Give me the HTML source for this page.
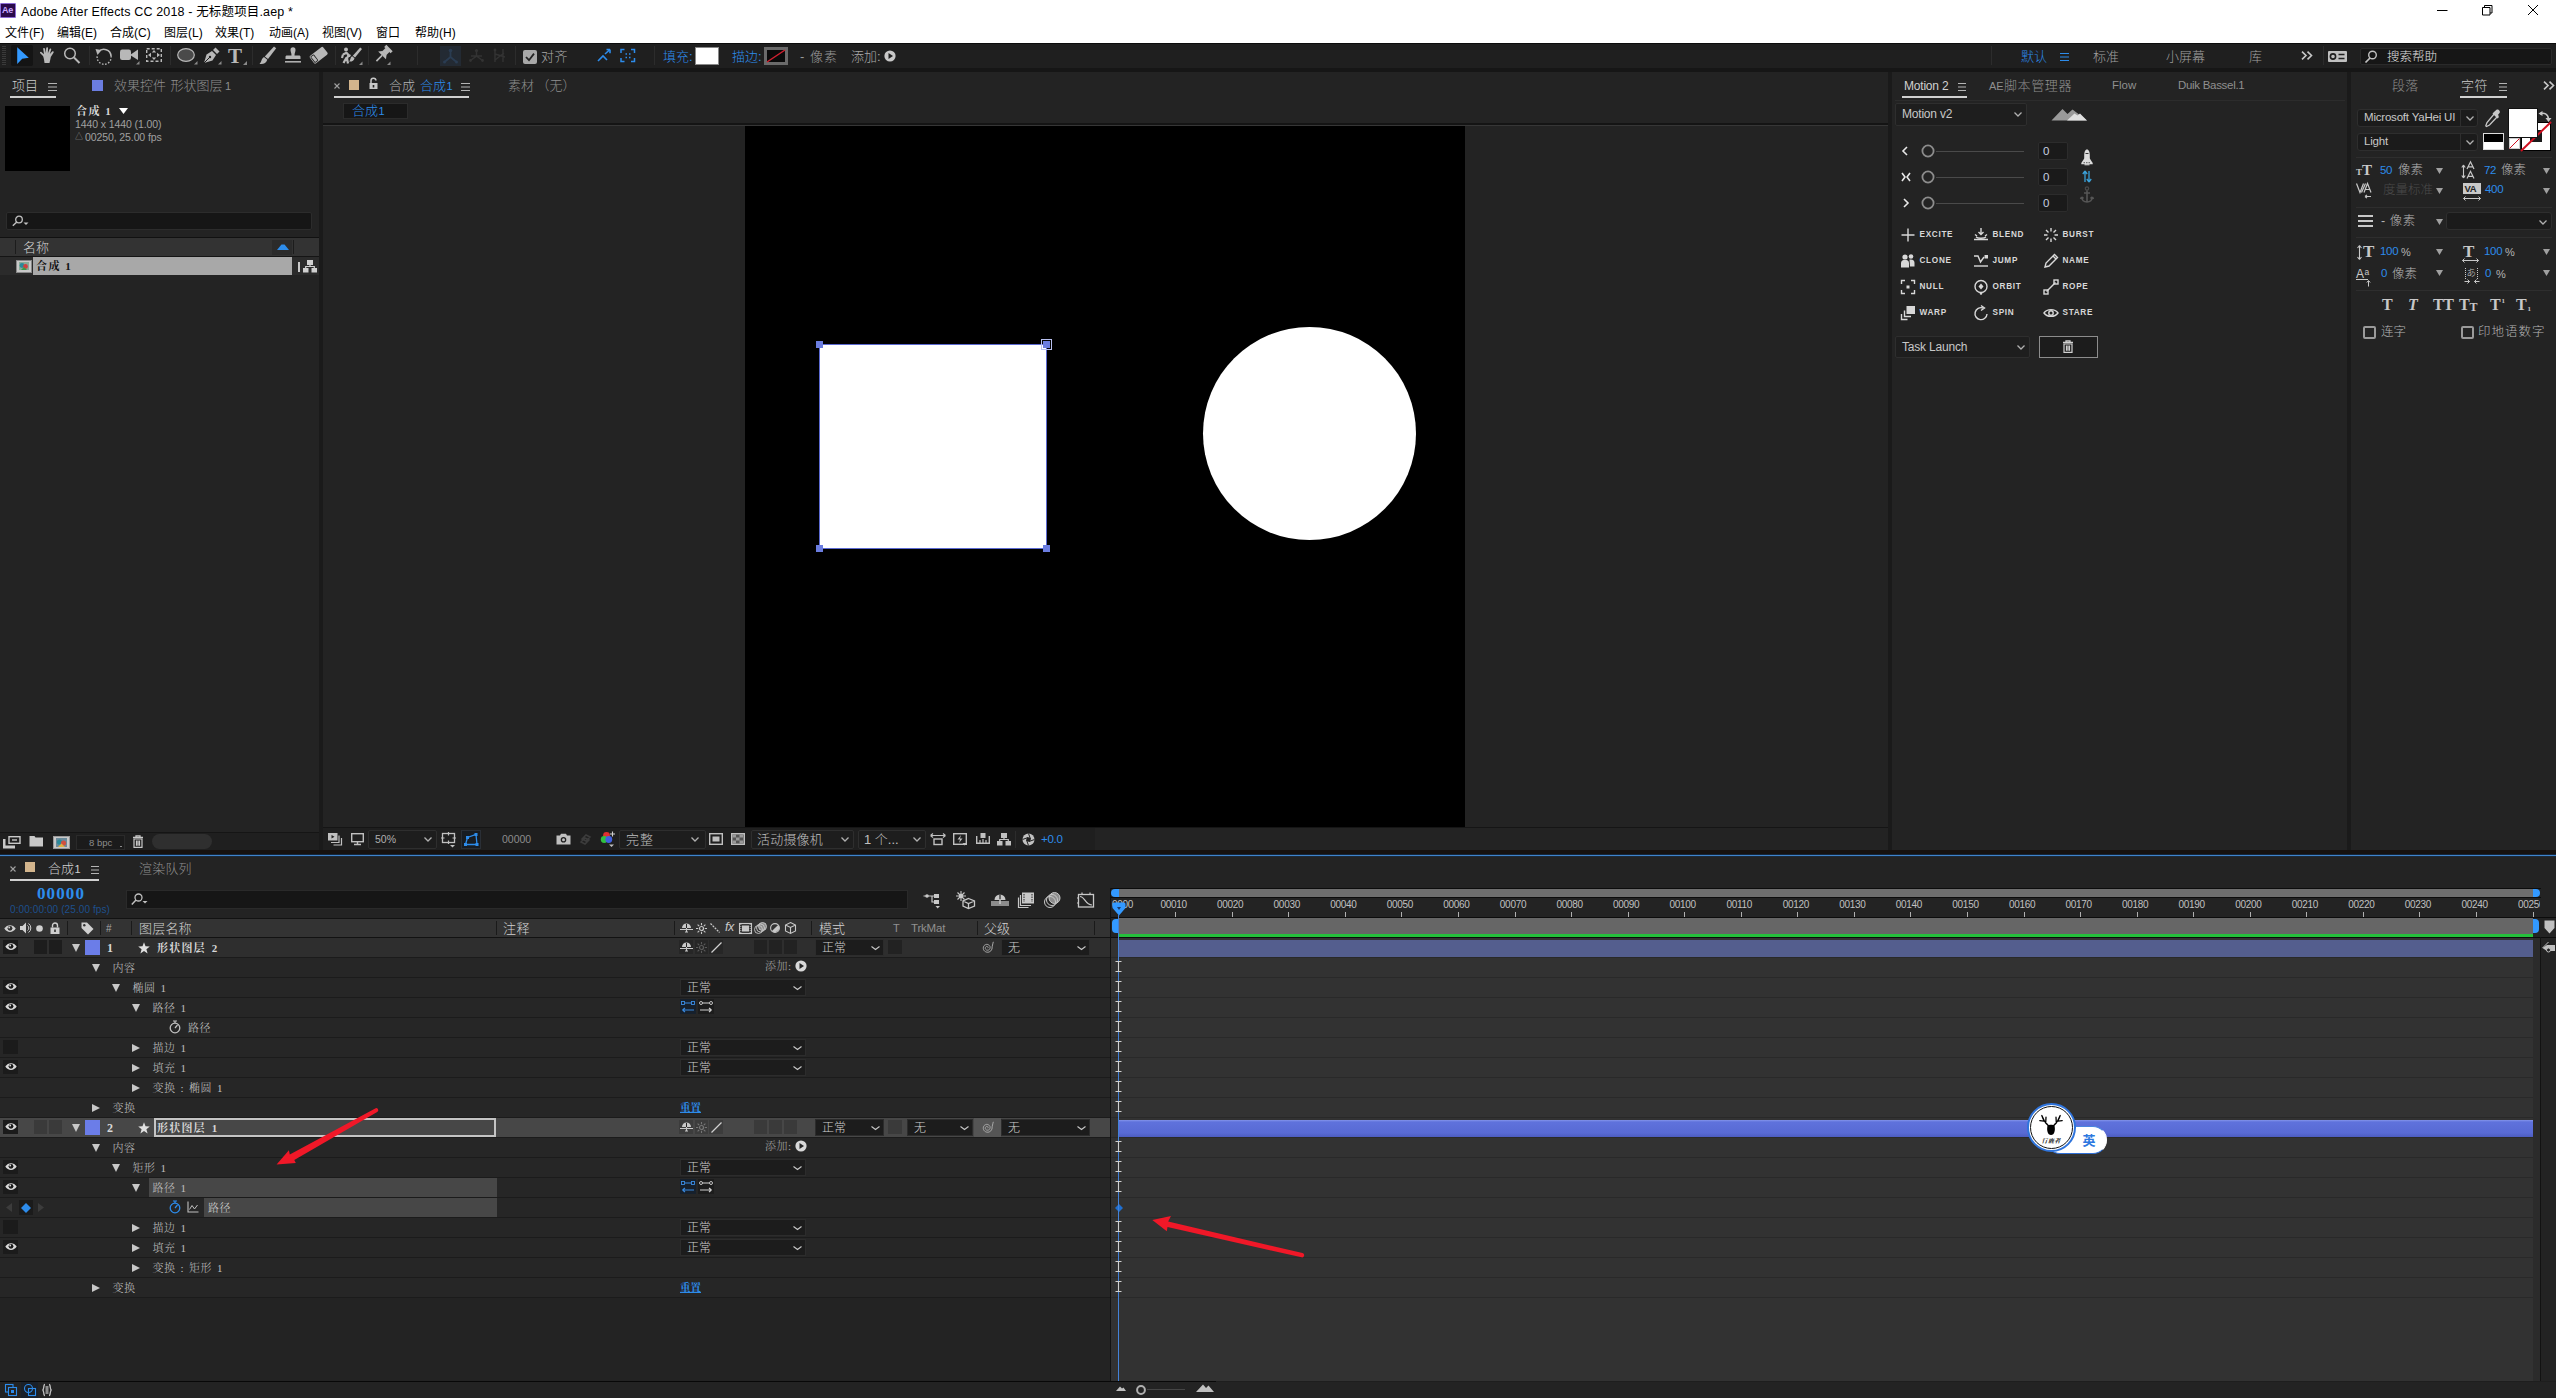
<!DOCTYPE html><html lang="zh"><head><meta charset="utf-8"><title>Adobe After Effects CC 2018</title><style>
*{box-sizing:border-box}
html,body{margin:0;padding:0}
body{width:2556px;height:1398px;background:#161616;position:relative;overflow:hidden;
font-family:"Liberation Sans","Noto Sans CJK SC",sans-serif;font-size:12px;color:#b4b4b4;font-weight:300;}
.a{position:absolute}
.t{position:absolute;white-space:nowrap;line-height:1}
.sf{font-family:"Liberation Serif","Noto Serif CJK SC",serif}
svg{position:absolute;overflow:visible}
</style></head><body>
<!-- p_top -->
<div class="a" style="left:0px;top:0px;width:2556px;height:43px;background:#ffffff;"></div><div class="a" style="left:0px;top:3px;width:16px;height:15px;background:#2a0a4a;border:1px solid #8c6bd6;border-radius:1px;"></div><span class="t " style="left:2px;top:4px;height:13px;line-height:13px;font-size:9px;color:#c9a8ff;font-weight:bold;letter-spacing:-0.3px;">Ae</span><span class="t " style="left:21px;top:3.75px;height:16.5px;line-height:16.5px;font-size:12.5px;color:#000;letter-spacing:0.150px;font-weight:400;">Adobe After Effects CC 2018 - 无标题项目.aep *</span><svg style="left:2437px;top:4px" width="12" height="12" viewBox="0 0 12 12"><path d="M0 6.500 H10.500" stroke="#000" stroke-width="1"/></svg><svg style="left:2482px;top:5px" width="12" height="12" viewBox="0 0 12 12"><path d="M0.500 2.500 H8 V10 H0.500 Z M2.500 2.500 V0.500 H10 V8 H8" stroke="#000" fill="none" stroke-width="1"/></svg><svg style="left:2528px;top:5px" width="12" height="12" viewBox="0 0 12 12"><path d="M0 0 L10 10 M10 0 L0 10" stroke="#000" stroke-width="1"/></svg><span class="t " style="left:5px;top:25px;height:16px;line-height:16px;font-size:12px;color:#000;font-weight:400;">文件(F)</span><span class="t " style="left:57px;top:25px;height:16px;line-height:16px;font-size:12px;color:#000;font-weight:400;">编辑(E)</span><span class="t " style="left:110px;top:25px;height:16px;line-height:16px;font-size:12px;color:#000;font-weight:400;">合成(C)</span><span class="t " style="left:164px;top:25px;height:16px;line-height:16px;font-size:12px;color:#000;font-weight:400;">图层(L)</span><span class="t " style="left:215px;top:25px;height:16px;line-height:16px;font-size:12px;color:#000;font-weight:400;">效果(T)</span><span class="t " style="left:269px;top:25px;height:16px;line-height:16px;font-size:12px;color:#000;font-weight:400;">动画(A)</span><span class="t " style="left:322px;top:25px;height:16px;line-height:16px;font-size:12px;color:#000;font-weight:400;">视图(V)</span><span class="t " style="left:376px;top:25px;height:16px;line-height:16px;font-size:12px;color:#000;font-weight:400;">窗口</span><span class="t " style="left:415px;top:25px;height:16px;line-height:16px;font-size:12px;color:#000;font-weight:400;">帮助(H)</span><div class="a" style="left:0px;top:43px;width:2556px;height:1px;background:#0c0c0c;"></div><div class="a" style="left:0px;top:44px;width:2556px;height:24px;background:#1f1f1f;"></div><div class="a" style="left:0px;top:68px;width:2556px;height:4px;background:#161616;"></div><div class="a" style="left:2px;top:46px;width:4px;height:19px;background:repeating-linear-gradient(#3a3a3a 0 1px,#1f1f1f 1px 2px);"></div><div class="a" style="left:11px;top:45px;width:22px;height:21px;background:#141414;border-radius:2px;"></div><svg style="left:16px;top:47px" width="14" height="18" viewBox="0 0 14 18"><path d="M1.200 0.300 L12.800 10.800 L6.200 11.800 L1.200 17 Z" fill="#3399ff"/></svg><svg style="left:39px;top:47px" width="16" height="17" viewBox="0 0 16 17"><path d="M4 9 L1.2 6.2 C0.4 5.4 1.6 4.4 2.4 5 L5 7.2 L4.2 2 C4 0.8 5.8 0.6 6 1.8 L6.8 6 L7.2 1 C7.3 -0.2 9.1 -0.1 9 1.1 L8.9 6.2 L10.6 2 C11 0.9 12.6 1.5 12.2 2.6 L10.8 7 L13.2 4.6 C14 3.8 15.2 4.8 14.5 5.7 L11.8 10 C11.4 12.5 10.8 14.6 10.5 16 L5.5 16 C5.3 13.6 4.8 11 4 9 Z" fill="#b8b8b8"/></svg><svg style="left:63px;top:47px" width="18" height="18" viewBox="0 0 18 18"><circle cx="7" cy="6.5" r="5.3" fill="none" stroke="#b8b8b8" stroke-width="1.5"/><path d="M11 10.5 L16.5 16" stroke="#b8b8b8" stroke-width="2"/></svg><div class="a" style="left:89px;top:46px;width:1px;height:19px;background:#2c2c2c;"></div><svg style="left:95px;top:47px" width="18" height="18" viewBox="0 0 18 18"><path d="M3.5 5 A7 7 0 0 1 16 9" fill="none" stroke="#b8b8b8" stroke-width="1.6"/><path d="M0.5 2 L6.5 3 L2.5 8 Z" fill="#b8b8b8"/><path d="M16 9 A7 7 0 1 1 2.5 8" fill="none" stroke="#b8b8b8" stroke-width="1.4" stroke-dasharray="1.6 1.6"/></svg><svg style="left:120px;top:49px" width="20" height="16" viewBox="0 0 20 16"><rect x="0" y="0.5" width="11" height="10.5" rx="2.2" fill="#b8b8b8"/><path d="M10 6 L18 0.5 V11 Z" fill="#b8b8b8"/><path d="M16 15.5 H19.5 V12 Z" fill="#8a8a8a"/></svg><svg style="left:146px;top:48px" width="17" height="15" viewBox="0 0 17 15"><rect x="0.7" y="0.7" width="14.6" height="12.6" fill="none" stroke="#b8b8b8" stroke-width="1.4" stroke-dasharray="3 2"/><path d="M2 7 L5 4.8 V9.2 Z M14 7 L11 4.8 V9.2 Z M8 2 L10.2 4.6 H5.8 Z M8 12 L10.2 9.4 H5.8 Z" fill="#b8b8b8"/></svg><div class="a" style="left:170px;top:46px;width:1px;height:19px;background:#2c2c2c;"></div><svg style="left:177px;top:48px" width="22" height="18" viewBox="0 0 22 18"><ellipse cx="9" cy="7" rx="8.3" ry="6.3" fill="#4a4a4a" stroke="#b8b8b8" stroke-width="1.2"/><path d="M17 16.5 H20.5 V13 Z" fill="#8a8a8a"/></svg><svg style="left:203px;top:47px" width="20" height="19" viewBox="0 0 20 19"><path d="M1 16 L3.5 7.5 L9 4 L13 8 L9.5 13.5 Z" fill="#b8b8b8"/><path d="M10 3 L12.5 0.5 L16.5 4.5 L14 7 Z" fill="#b8b8b8"/><path d="M1 16 L6.5 10.5" stroke="#1f1f1f" stroke-width="1"/><circle cx="7" cy="10" r="1.2" fill="#1f1f1f"/><path d="M15 17.5 H18.5 V14 Z" fill="#8a8a8a"/></svg><span class="t sf" style="left:228px;top:43.5px;height:25px;line-height:25px;font-size:21px;color:#b8b8b8;font-weight:bold;">T</span><svg style="left:243px;top:61px" width="4" height="4" viewBox="0 0 4 4"><path d="M0 4 H4 V0 Z" fill="#8a8a8a"/></svg><div class="a" style="left:252px;top:46px;width:1px;height:19px;background:#2c2c2c;"></div><svg style="left:259px;top:46px" width="18" height="19" viewBox="0 0 18 19"><path d="M15 0.500 L17.200 2.300 L9 13 L5.800 10.400 Z" fill="#b8b8b8"/><path d="M5 11 L8.300 13.700 C7.500 17 4 18.500 0.500 17.800 C2.800 16 2.200 12.500 5 11 Z" fill="#b8b8b8"/></svg><svg style="left:284px;top:47px" width="18" height="17" viewBox="0 0 18 17"><path d="M6.500 3 A2.500 2.800 0 1 1 11.500 3 C11.500 5 10.500 6 10.500 8.500 H15 C16 8.500 16.500 9 16.500 10 V12 H1.500 V10 C1.500 9 2 8.500 3 8.500 H7.500 C7.500 6 6.500 5 6.500 3 Z" fill="#b8b8b8"/><path d="M1 14.800 H17" stroke="#b8b8b8" stroke-width="1.500"/></svg><svg style="left:309px;top:46px" width="19" height="18" viewBox="0 0 19 18"><g transform="rotate(-38 9.500 9)"><rect x="1" y="4.500" width="17" height="9.500" rx="1.500" fill="#b8b8b8"/><rect x="1.700" y="5.200" width="4.500" height="8.100" rx="1" fill="#1f1f1f"/><rect x="2.500" y="6" width="2.900" height="6.500" fill="#b8b8b8"/></g></svg><div class="a" style="left:335px;top:46px;width:1px;height:19px;background:#2c2c2c;"></div><svg style="left:340px;top:47px" width="24" height="19" viewBox="0 0 24 19"><circle cx="6" cy="2.600" r="2" fill="#b8b8b8"/><path d="M3 7.500 L6.500 5.800 L8.500 8 L7 11.500 L8 16.500 M6.500 10.500 L3.500 16 M3 7.500 L2 11 M8.500 8 L10.500 9" stroke="#b8b8b8" stroke-width="2.200" fill="none" stroke-linejoin="round"/><path d="M20.200 0.500 L22 2 L15 10.500 L12.800 8.700 Z" fill="#b8b8b8"/><path d="M12.200 9.300 L14.500 11.200 C14 13.800 11.500 15 9 14.500 C10.800 13.300 10 10.300 12.200 9.300 Z" fill="#b8b8b8"/><path d="M19 18 H22.500 V14.500 Z" fill="#8a8a8a"/></svg><div class="a" style="left:368px;top:46px;width:1px;height:19px;background:#2c2c2c;"></div><svg style="left:372px;top:46px" width="20" height="20" viewBox="0 0 20 20"><g transform="translate(11.500 8) rotate(45)" fill="#b8b8b8"><rect x="-4.500" y="-8.500" width="9" height="3"/><rect x="-2.800" y="-6" width="5.600" height="5"/><path d="M-2.800 -1.500 H2.800 L5.500 2 H-5.500 Z"/><rect x="-0.800" y="2" width="1.600" height="8"/></g><path d="M15 19 H18.500 V15.500 Z" fill="#8a8a8a"/></svg><div class="a" style="left:417px;top:46px;width:1px;height:19px;background:#2c2c2c;"></div><div class="a" style="left:440px;top:46px;width:21px;height:20px;background:#232a33;"></div><svg style="left:442px;top:48px" width="17" height="16" viewBox="0 0 17 16"><path d="M8.500 2 V9 L2.500 14 M8.500 9 L14.500 14" stroke="#2a3c52" stroke-width="1.800" fill="none"/><circle cx="8.500" cy="2.500" r="1.800" fill="#2a3c52"/><circle cx="2.500" cy="14" r="1.500" fill="#2a3c52"/><circle cx="14.500" cy="14" r="1.500" fill="#2a3c52"/></svg><svg style="left:468px;top:48px" width="17" height="16" viewBox="0 0 17 16"><path d="M8.500 2 V8 L2.500 12.500 M8.500 8 L14.500 12.500 M3 8 L14 8" stroke="#333" stroke-width="1.500" fill="none"/><circle cx="8.500" cy="2.500" r="1.600" fill="#333"/><circle cx="2.500" cy="12.500" r="1.400" fill="#333"/><circle cx="14.500" cy="12.500" r="1.400" fill="#333"/></svg><svg style="left:492px;top:48px" width="17" height="16" viewBox="0 0 17 16"><path d="M3 1 V14 M11 1 V14 M3 6 L13 9 M3 12 L12 5" stroke="#333" stroke-width="1.400" fill="none"/><circle cx="3" cy="2" r="1.400" fill="#333"/></svg><div class="a" style="left:515px;top:46px;width:1px;height:19px;background:#2c2c2c;"></div><div class="a" style="left:523px;top:50px;width:14px;height:14px;background:#a8a8a8;border-radius:2px;"></div><svg style="left:523px;top:50px" width="14" height="14" viewBox="0 0 14 14"><path d="M3 7 L6 10.200 L11 3.600" stroke="#222" stroke-width="1.800" fill="none"/></svg><span class="t " style="left:541px;top:48px;height:17px;line-height:17px;font-size:13px;color:#a8a8a8;letter-spacing:0.500px;">对齐</span><svg style="left:596px;top:48px" width="17" height="16" viewBox="0 0 17 16"><path d="M2 13 L7 8 L11 12 M9 6 L14 1.500 M14 1.500 H10.500 M14 1.500 V5.200" stroke="#2d8ceb" stroke-width="1.600" fill="none"/></svg><svg style="left:620px;top:48px" width="16" height="16" viewBox="0 0 16 16"><path d="M1 5 V1.500 H4.500 M11 1.500 H14.500 V5 M14.500 10 V13.500 H11 M4.500 13.500 H1 V10" stroke="#2d8ceb" stroke-width="1.500" fill="none"/><path d="M5.500 6 H7 M9 6 H10.500 M5.500 9.500 H7 M9 9.500 H10.500" stroke="#2d8ceb" stroke-width="1.500"/></svg><div class="a" style="left:654px;top:46px;width:1px;height:19px;background:#2c2c2c;"></div><span class="t " style="left:663px;top:48px;height:17px;line-height:17px;font-size:13px;color:#2d8ceb;letter-spacing:0;">填充:</span><div class="a" style="left:695px;top:47px;width:24px;height:18px;background:#ffffff;border:1px solid #888;"></div><span class="t " style="left:732px;top:48px;height:17px;line-height:17px;font-size:13px;color:#2d8ceb;letter-spacing:0;">描边:</span><div class="a" style="left:764px;top:47px;width:24px;height:18px;background:#0a0a0a;border:3px solid #6a6a6a;"></div><svg style="left:766px;top:49px" width="20" height="14" viewBox="0 0 20 14"><path d="M1 13 L19 1" stroke="#d02030" stroke-width="1.500"/></svg><span class="t " style="left:800px;top:48px;height:17px;line-height:17px;font-size:13px;color:#9a9a9a;letter-spacing:1px;">- 像素</span><span class="t " style="left:851px;top:48px;height:17px;line-height:17px;font-size:13px;color:#a8a8a8;letter-spacing:0;">添加:</span><svg style="left:884px;top:50px" width="12" height="12" viewBox="0 0 12 12"><circle cx="6" cy="6" r="5.600" fill="#c8c8c8"/><path d="M4.500 3 L9 6 L4.500 9 Z" fill="#1f1f1f"/></svg><div class="a" style="left:1991px;top:46px;width:1px;height:19px;background:#2c2c2c;"></div><span class="t " style="left:2021px;top:47.5px;height:17px;line-height:17px;font-size:13px;color:#2d8ceb;letter-spacing:0;">默认</span><svg style="left:2060px;top:52.5px" width="9" height="8" viewBox="0 0 9 8"><path d="M0 0.5 H9 M0 4 H9 M0 7.5 H9" stroke="#2d8ceb" stroke-width="1.2" fill="none"/></svg><span class="t " style="left:2093px;top:47.5px;height:17px;line-height:17px;font-size:13px;color:#a0a0a0;letter-spacing:0;">标准</span><span class="t " style="left:2166px;top:47.5px;height:17px;line-height:17px;font-size:13px;color:#a0a0a0;letter-spacing:0;">小屏幕</span><span class="t " style="left:2249px;top:47.5px;height:17px;line-height:17px;font-size:13px;color:#a0a0a0;">库</span><svg style="left:2301px;top:51px" width="12" height="9" viewBox="0 0 12 9"><path d="M1 0.700 L5 4.500 L1 8.300 M6.500 0.700 L10.500 4.500 L6.500 8.300" stroke="#c8c8c8" stroke-width="1.600" fill="none"/></svg><div class="a" style="left:2323px;top:46px;width:1px;height:19px;background:#2c2c2c;"></div><svg style="left:2328px;top:51px" width="19" height="11" viewBox="0 0 19 11"><rect x="0" y="0" width="19" height="11" rx="1" fill="#c0c0c0"/><circle cx="5" cy="5.500" r="2.600" fill="none" stroke="#1f1f1f" stroke-width="1.600"/><path d="M10.500 3.500 H16.500 M10.500 7.500 H16.500" stroke="#1f1f1f" stroke-width="1.500"/></svg><div class="a" style="left:2360px;top:48px;width:192px;height:17px;background:#161616;border:1px solid #2a2a2a;border-radius:2px;"></div><svg style="left:2364px;top:50px" width="14" height="14" viewBox="0 0 14 14"><circle cx="8.500" cy="5" r="3.800" fill="none" stroke="#c0c0c0" stroke-width="1.400"/><path d="M6 8 L1.500 12.500" stroke="#c0c0c0" stroke-width="1.700"/></svg><span class="t " style="left:2387px;top:48.75px;height:16.5px;line-height:16.5px;font-size:12.5px;color:#e0e0e0;">搜索帮助</span>
<!-- p_project -->
<div class="a" style="left:0px;top:72px;width:319px;height:778px;background:#232323;"></div><div class="a" style="left:319px;top:72px;width:4px;height:778px;background:#1a1a1a;"></div><span class="t " style="left:12px;top:77px;height:17px;line-height:17px;font-size:13px;color:#d0d0d0;letter-spacing:0;">项目</span><svg style="left:47.5px;top:82.5px" width="9" height="8" viewBox="0 0 9 8"><path d="M0 0.5 H9 M0 4 H9 M0 7.5 H9" stroke="#b4b4b4" stroke-width="1.2" fill="none"/></svg><div class="a" style="left:10px;top:96px;width:46px;height:2px;background:#d0d0d0;"></div><div class="a" style="left:92px;top:80px;width:11px;height:11px;background:#6b7de0;"></div><span class="t " style="left:114px;top:77px;height:17px;line-height:17px;font-size:13px;color:#8f8f8f;letter-spacing:0;word-spacing:1px;">效果控件 形状图层</span><span class="t " style="left:225px;top:78.5px;height:15px;line-height:15px;font-size:11px;color:#8f8f8f;">1</span><div class="a" style="left:5px;top:106px;width:65px;height:65px;background:#000;"></div><span class="t sf" style="left:76px;top:103.5px;height:15px;line-height:15px;font-size:11px;color:#d8d8d8;font-weight:bold;letter-spacing:1.5px;">合成 1</span><svg style="left:119px;top:108px" width="9" height="6" viewBox="0 0 9 6"><path d="M0 0 H9 L4.5 6 Z" fill="#ffffff"/></svg><span class="t " style="left:75px;top:116.75px;height:14.5px;line-height:14.5px;font-size:10.5px;color:#a0a0a0;letter-spacing:-0.1px;">1440 x 1440 (1.00)</span><span class="t " style="left:75px;top:131px;height:12px;line-height:12px;font-size:8px;color:#a0a0a0;">△</span><span class="t " style="left:85px;top:129.75px;height:14.5px;line-height:14.5px;font-size:10.5px;color:#a0a0a0;letter-spacing:-0.1px;">00250, 25.00 fps</span><div class="a" style="left:6px;top:212px;width:306px;height:18px;background:#161616;border:1px solid #2c2c2c;border-radius:2px;"></div><svg style="left:12px;top:215px" width="18" height="12" viewBox="0 0 18 12"><circle cx="7" cy="4.500" r="3.300" fill="none" stroke="#c0c0c0" stroke-width="1.300"/><path d="M4.800 7 L0.800 10.800" stroke="#c0c0c0" stroke-width="1.500"/><path d="M11.500 7.500 H16.500 L14 10 Z" fill="#c0c0c0"/></svg><div class="a" style="left:0px;top:237px;width:319px;height:1px;background:#111;"></div><div class="a" style="left:0px;top:238px;width:319px;height:18px;background:#333333;"></div><div class="a" style="left:0px;top:256px;width:319px;height:1px;background:#151515;"></div><div class="a" style="left:15px;top:240px;width:1px;height:14px;background:#1c1c1c;"></div><span class="t " style="left:23px;top:238.5px;height:17px;line-height:17px;font-size:13px;color:#d0d0d0;letter-spacing:0;">名称</span><div class="a" style="left:272px;top:240px;width:20px;height:15px;background:#2b2b2b;"></div><svg style="left:277px;top:244px" width="12" height="6" viewBox="0 0 12 6"><path d="M0 6 L4.500 0.500 H7.500 L12 6 Z" fill="#2d8ceb"/></svg><div class="a" style="left:293px;top:240px;width:1px;height:14px;background:#1c1c1c;"></div><div class="a" style="left:0px;top:257px;width:319px;height:18px;background:#2b2b2b;"></div><div class="a" style="left:33px;top:257px;width:259px;height:18px;background:#a8a8a8;"></div><div class="a" style="left:16px;top:260px;width:16px;height:13px;background:#c8c8c8;border:1px solid #888;"></div><div class="a" style="left:19px;top:262px;width:10px;height:8px;background:#8a9;"></div><svg style="left:19px;top:262px" width="10" height="8" viewBox="0 0 10 8"><circle cx="3" cy="3.500" r="2.400" fill="#2a8a9a"/><circle cx="6.500" cy="4.500" r="2.400" fill="#d04040"/><path d="M2 8 L5 5 L8 8 Z" fill="#3a9a4a"/></svg><span class="t sf" style="left:36px;top:259px;height:15px;line-height:15px;font-size:11px;color:#111;font-weight:bold;letter-spacing:1.500px;">合成 1</span><div class="a" style="left:298px;top:262px;width:2px;height:10px;background:#c8c8c8;"></div><svg style="left:303px;top:260px" width="14" height="13" viewBox="0 0 14 13"><rect x="4" y="0" width="6" height="5" fill="#d0d0d0"/><rect x="0" y="8" width="5.500" height="4.500" fill="#d0d0d0"/><rect x="8.500" y="8" width="5.500" height="4.500" fill="#d0d0d0"/><path d="M7 5 V6.500 M2.700 8 V6.500 H11.300 V8" stroke="#d0d0d0" stroke-width="1.200" fill="none"/></svg><div class="a" style="left:0px;top:832px;width:319px;height:1px;background:#151515;"></div><div class="a" style="left:0px;top:833px;width:319px;height:17px;background:#1f1f1f;"></div><svg style="left:3px;top:836px" width="18" height="13" viewBox="0 0 18 13"><rect x="6" y="0.700" width="11" height="6.600" fill="none" stroke="#c8c8c8" stroke-width="1.400"/><path d="M9 4 H14" stroke="#c8c8c8" stroke-width="1.400"/><path d="M0 3 H2.500 V9.500 H12 V12.500 H0 Z" fill="#c8c8c8"/></svg><svg style="left:29px;top:835px" width="15" height="12" viewBox="0 0 15 12"><path d="M0.500 1 H5.500 L6.500 2.500 H14 V11.500 H0.500 Z" fill="#c8c8c8"/></svg><div class="a" style="left:53px;top:836px;width:17px;height:13px;background:#c8c8c8;border:1px solid #999;"></div><svg style="left:56px;top:838px" width="11" height="9" viewBox="0 0 11 9"><rect width="11" height="9" fill="#6a8a9a"/><circle cx="3.500" cy="4" r="2.600" fill="#2a8a9a"/><circle cx="7.500" cy="5" r="2.600" fill="#d05040"/><path d="M2 9 L5.500 5.500 L9 9 Z" fill="#e0b040"/></svg><div class="a" style="left:76px;top:835px;width:49px;height:15px;background:#1b1b1b;border:1px solid #2a2a2a;"></div><span class="t " style="left:89px;top:836.25px;height:13.5px;line-height:13.5px;font-size:9.5px;color:#8c8c8c;">8 bpc</span><div class="a" style="left:120px;top:846px;width:2px;height:1px;background:#8c8c8c;"></div><svg style="left:132px;top:835px" width="12" height="13" viewBox="0 0 12 13"><path d="M1 2.500 H11 M4 2.500 V0.800 H8 V2.500" stroke="#c8c8c8" stroke-width="1.300" fill="none"/><path d="M2 4 H10 V12.300 H2 Z M4.500 5.500 V10.800 M6 5.500 V10.800 M7.500 5.500 V10.800" stroke="#c8c8c8" stroke-width="1.200" fill="none"/></svg><div class="a" style="left:152px;top:834px;width:60px;height:15px;background:#2f2f2f;border-radius:7.500px;"></div>
<!-- p_comp -->
<div class="a" style="left:323px;top:72px;width:1565px;height:778px;background:#232323;"></div><div class="a" style="left:1888px;top:72px;width:4px;height:778px;background:#1a1a1a;"></div><svg style="left:334px;top:83px" width="6" height="6" viewBox="0 0 6 6"><path d="M0.500 0.500 L5.500 5.500 M5.500 0.500 L0.500 5.500" stroke="#a0a0a0" stroke-width="1.100"/></svg><div class="a" style="left:349px;top:80px;width:10px;height:10px;background:#d2b48c;"></div><svg style="left:369px;top:78px" width="10" height="11" viewBox="0 0 10 11"><path d="M2 5 V3 A2.500 2.500 0 0 1 7 2.500" stroke="#c8c8c8" stroke-width="1.500" fill="none"/><rect x="0.500" y="5" width="8" height="6" fill="#c8c8c8"/><rect x="3.700" y="7" width="1.600" height="2.500" fill="#232323"/></svg><span class="t " style="left:389px;top:77px;height:17px;line-height:17px;font-size:13px;color:#b4b4b4;letter-spacing:0;">合成</span><span class="t " style="left:420px;top:77px;height:17px;line-height:17px;font-size:13px;color:#2d8ceb;letter-spacing:0;">合成</span><span class="t " style="left:446.5px;top:78.5px;height:15px;line-height:15px;font-size:11px;color:#2d8ceb;">1</span><svg style="left:461px;top:82.5px" width="9" height="8" viewBox="0 0 9 8"><path d="M0 0.5 H9 M0 4 H9 M0 7.5 H9" stroke="#b4b4b4" stroke-width="1.2" fill="none"/></svg><div class="a" style="left:334px;top:96px;width:135px;height:2px;background:#d0d0d0;"></div><span class="t " style="left:508px;top:77px;height:17px;line-height:17px;font-size:13px;color:#8f8f8f;letter-spacing:0;word-spacing:-1px;">素材 （无）</span><div class="a" style="left:343px;top:103px;width:65px;height:16px;background:#161616;border:1px solid #2b2b2b;"></div><span class="t " style="left:352px;top:102px;height:17px;line-height:17px;font-size:13px;color:#2d8ceb;letter-spacing:0;">合成</span><span class="t " style="left:378.5px;top:103.5px;height:15px;line-height:15px;font-size:11px;color:#2d8ceb;">1</span><div class="a" style="left:323px;top:123px;width:1565px;height:2px;background:#141414;"></div><div class="a" style="left:323px;top:125px;width:1565px;height:1px;background:#363636;"></div><div class="a" style="left:745px;top:126px;width:720px;height:701px;background:#000;"></div><div class="a" style="left:819px;top:344px;width:228px;height:205px;background:#ffffff;border:1px solid #5b69d0;"></div><div class="a" style="left:816px;top:341px;width:7px;height:7px;background:#6b7de0;"></div><div class="a" style="left:816px;top:545px;width:7px;height:7px;background:#6b7de0;"></div><div class="a" style="left:1043px;top:545px;width:7px;height:7px;background:#6b7de0;"></div><div class="a" style="left:1041px;top:339px;width:11px;height:11px;border:1px solid #b8c0f0;"></div><div class="a" style="left:1043px;top:341px;width:7px;height:7px;background:#6b7de0;"></div><div class="a" style="left:1203px;top:327px;width:213px;height:213px;background:#ffffff;border-radius:50%;"></div><div class="a" style="left:323px;top:827px;width:1565px;height:1px;background:#151515;"></div><div class="a" style="left:323px;top:828px;width:1565px;height:22px;background:#1f1f1f;"></div><div class="a" style="left:1095px;top:828px;width:793px;height:22px;background:#232323;"></div><svg style="left:328px;top:833px" width="15" height="13" viewBox="0 0 15 13"><rect x="0" y="0" width="9.500" height="7.500" fill="#c0c0c0"/><path d="M3.500 2 L6.500 3.800 L3.500 5.600 Z" fill="#1f1f1f"/><path d="M11 2.500 V9.500 H3 M13.500 5 V12 H5.500" stroke="#c0c0c0" stroke-width="1.200" fill="none"/></svg><svg style="left:351px;top:833px" width="13" height="13" viewBox="0 0 13 13"><rect x="0.700" y="0.700" width="11.600" height="8" fill="none" stroke="#c0c0c0" stroke-width="1.400"/><path d="M6.500 9 V11 M3 11.500 H10" stroke="#c0c0c0" stroke-width="1.400"/></svg><div class="a" style="left:368px;top:830px;width:69px;height:19px;background:#1d1d1d;border:1px solid #2e2e2e;border-radius:2px;"></div><span class="t " style="left:375px;top:832.25px;height:14.5px;line-height:14.5px;font-size:10.5px;color:#b0b0b0;">50%</span><svg style="left:424px;top:837.25px" width="8" height="4.5" viewBox="0 0 8 4.5"><path d="M0.5 0.5 L4 4 L7.5 0.5" fill="none" stroke="#b0b0b0" stroke-width="1.3"/></svg><svg style="left:441px;top:832px" width="16" height="17" viewBox="0 0 16 17"><rect x="1.500" y="1.500" width="12" height="9" fill="none" stroke="#c0c0c0" stroke-width="1.300"/><path d="M7.500 0 V3.500 M7.500 8.500 V12 M0 6 H3.500 M11.500 6 H15" stroke="#c0c0c0" stroke-width="1.200"/><path d="M9 13 H14 L11.500 15.500 Z" fill="#c0c0c0"/></svg><div class="a" style="left:461px;top:830px;width:20px;height:19px;background:#171c22;border:1px solid #2a2f36;"></div><svg style="left:464px;top:833px" width="15" height="13" viewBox="0 0 15 13"><path d="M1.500 11.500 L3.500 4.500 L12 1.500 L13 11.500 Z" fill="none" stroke="#2d8ceb" stroke-width="1.300"/><g fill="#2d8ceb"><rect x="0" y="10" width="3" height="3"/><rect x="2" y="3" width="3" height="3"/><rect x="10.500" y="0" width="3" height="3"/><rect x="11.500" y="10" width="3" height="3"/></g></svg><span class="t " style="left:502px;top:832.25px;height:14.5px;line-height:14.5px;font-size:10.5px;color:#8c8c8c;">00000</span><svg style="left:556px;top:833px" width="15" height="12" viewBox="0 0 15 12"><path d="M0.500 2.500 H4 L5 0.800 H10 L11 2.500 H14.500 V11.500 H0.500 Z" fill="#c0c0c0"/><circle cx="7.500" cy="6.800" r="2.800" fill="#1f1f1f"/><circle cx="7.500" cy="6.800" r="1.500" fill="#c0c0c0"/></svg><svg style="left:578px;top:833px" width="15" height="12" viewBox="0 0 15 12"><path d="M4 6 L8 2 L12 4 L8 8 Z M3 9 L7 5 L11 7 L7 11 Z" fill="none" stroke="#3c3c3c" stroke-width="1.500"/></svg><svg style="left:600px;top:831px" width="16" height="18" viewBox="0 0 16 18"><circle cx="6.500" cy="4.500" r="3.400" fill="#e03030"/><circle cx="4.200" cy="8.500" r="3.400" fill="#30c040"/><circle cx="8.800" cy="8.500" r="3.400" fill="#4060e0"/><path d="M12.500 0.500 V5.500 M10 3 H15" stroke="#d0d0d0" stroke-width="1.100"/><path d="M9 13.500 H14 L11.500 16 Z" fill="#c0c0c0"/></svg><div class="a" style="left:619px;top:830px;width:87px;height:19px;background:#1d1d1d;border:1px solid #2e2e2e;border-radius:2px;"></div><span class="t " style="left:626px;top:831px;height:17px;line-height:17px;font-size:13px;color:#c0c0c0;letter-spacing:1px;">完整</span><svg style="left:691px;top:837.25px" width="8" height="4.5" viewBox="0 0 8 4.5"><path d="M0.5 0.5 L4 4 L7.5 0.5" fill="none" stroke="#b0b0b0" stroke-width="1.3"/></svg><svg style="left:709px;top:833px" width="14" height="13" viewBox="0 0 14 13"><rect x="0.700" y="0.700" width="12.600" height="10.600" fill="none" stroke="#c0c0c0" stroke-width="1.400"/><rect x="3.500" y="3.500" width="7" height="5" fill="#c0c0c0"/></svg><svg style="left:731px;top:833px" width="14" height="13" viewBox="0 0 14 13"><rect x="0.700" y="0.700" width="12.600" height="10.600" fill="#555" stroke="#c0c0c0" stroke-width="1.400"/><path d="M1.500 1.500 H5 V4.500 H1.500 Z M8.500 1.500 H12 V4.500 H8.500 Z M5 4.500 H8.500 V7.500 H5 Z M1.500 7.500 H5 V10.500 H1.500 Z M8.500 7.500 H12 V10.500 H8.500 Z" fill="#999"/></svg><div class="a" style="left:751px;top:830px;width:103px;height:19px;background:#1d1d1d;border:1px solid #2e2e2e;border-radius:2px;"></div><span class="t " style="left:757px;top:831px;height:17px;line-height:17px;font-size:13px;color:#c0c0c0;letter-spacing:0.200px;">活动摄像机</span><svg style="left:841px;top:837.25px" width="8" height="4.5" viewBox="0 0 8 4.5"><path d="M0.5 0.5 L4 4 L7.5 0.5" fill="none" stroke="#b0b0b0" stroke-width="1.3"/></svg><div class="a" style="left:858px;top:830px;width:68px;height:19px;background:#1d1d1d;border:1px solid #2e2e2e;border-radius:2px;"></div><span class="t " style="left:864px;top:831px;height:17px;line-height:17px;font-size:13px;color:#c0c0c0;">1 个...</span><svg style="left:913px;top:837.25px" width="8" height="4.5" viewBox="0 0 8 4.5"><path d="M0.5 0.5 L4 4 L7.5 0.5" fill="none" stroke="#b0b0b0" stroke-width="1.3"/></svg><svg style="left:930px;top:833px" width="16" height="13" viewBox="0 0 16 13"><path d="M0.500 2.500 H15.500 M0.500 2.500 L3 0.500 M0.500 2.500 L3 4.500 M15.500 2.500 L13 0.500 M15.500 2.500 L13 4.500" stroke="#c0c0c0" stroke-width="1.200" fill="none"/><rect x="4" y="6" width="8" height="5.500" fill="none" stroke="#c0c0c0" stroke-width="1.400"/></svg><svg style="left:953px;top:833px" width="15" height="14" viewBox="0 0 15 14"><rect x="0.700" y="0.700" width="12.600" height="10.600" fill="none" stroke="#c0c0c0" stroke-width="1.400"/><path d="M8 2 L4.500 6.500 H7 L6 10 L9.500 5.500 H7 Z" fill="#c0c0c0"/><path d="M9.500 10 H14 L11.700 12.500 Z" fill="#c0c0c0"/></svg><svg style="left:976px;top:833px" width="14" height="12" viewBox="0 0 14 12"><path d="M0.700 3 V10.300 H13.300 V3" fill="none" stroke="#c0c0c0" stroke-width="1.400"/><rect x="4.500" y="0" width="5" height="5" fill="#c0c0c0"/><path d="M4 10 V7 M7 10 V6 M10 10 V7" stroke="#c0c0c0" stroke-width="1.200"/></svg><svg style="left:997px;top:833px" width="14" height="13" viewBox="0 0 14 13"><rect x="4" y="0" width="6" height="5" fill="#c0c0c0"/><rect x="0" y="8" width="5.500" height="4.500" fill="#c0c0c0"/><rect x="8.500" y="8" width="5.500" height="4.500" fill="#c0c0c0"/><path d="M7 5 V6.500 M2.700 8 V6.500 H11.300 V8" stroke="#c0c0c0" stroke-width="1.200" fill="none"/></svg><div class="a" style="left:1015px;top:831px;width:1px;height:17px;background:#2c2c2c;"></div><svg style="left:1022px;top:833px" width="13" height="13" viewBox="0 0 13 13"><circle cx="6.500" cy="6.500" r="6" fill="#c0c0c0"/><circle cx="6.500" cy="6.500" r="2.200" fill="#1f1f1f"/><path d="M6.500 0.500 L8.500 6 M12.500 6.500 L7 8.500 M6.500 12.500 L4.500 7 M0.500 6.500 L6 4.500" stroke="#1f1f1f" stroke-width="1"/></svg><span class="t " style="left:1041px;top:831.75px;height:15.5px;line-height:15.5px;font-size:11.5px;color:#2d8ceb;letter-spacing:-0.300px;">+0.0</span>
<!-- p_motion -->
<div class="a" style="left:1892px;top:72px;width:455px;height:778px;background:#232323;"></div><div class="a" style="left:2347px;top:72px;width:4px;height:778px;background:#1a1a1a;"></div><span class="t " style="left:1904px;top:78px;height:16px;line-height:16px;font-size:12px;color:#d0d0d0;letter-spacing:-0.200px;">Motion 2</span><svg style="left:1958px;top:82.5px" width="8" height="8" viewBox="0 0 8 8"><path d="M0 0.5 H8 M0 4 H8 M0 7.5 H8" stroke="#b4b4b4" stroke-width="1.2" fill="none"/></svg><div class="a" style="left:1902px;top:96px;width:65px;height:2px;background:#d0d0d0;"></div><span class="t " style="left:1989px;top:78.5px;height:15px;line-height:15px;font-size:11px;color:#8f8f8f;">AE</span><span class="t " style="left:2004px;top:77px;height:17px;line-height:17px;font-size:13px;color:#8f8f8f;letter-spacing:0.600px;">脚本管理器</span><span class="t " style="left:2112px;top:78.25px;height:15.5px;line-height:15.5px;font-size:11.5px;color:#8f8f8f;">Flow</span><span class="t " style="left:2178px;top:78.25px;height:15.5px;line-height:15.5px;font-size:11.5px;color:#8f8f8f;letter-spacing:-0.300px;">Duik Bassel.1</span><div class="a" style="left:1895px;top:100px;width:450px;height:1px;background:#2c2c2c;"></div><div class="a" style="left:1895px;top:103px;width:132px;height:23px;background:#1e1e1e;border:1px solid #2e2e2e;border-radius:2px;"></div><span class="t " style="left:1902px;top:106px;height:16px;line-height:16px;font-size:12px;color:#c8c8c8;letter-spacing:-0.200px;">Motion v2</span><svg style="left:2014px;top:112.25px" width="8" height="4.5" viewBox="0 0 8 4.5"><path d="M0.5 0.5 L4 4 L7.5 0.5" fill="none" stroke="#b0b0b0" stroke-width="1.3"/></svg><svg style="left:2051px;top:108px" width="37" height="13" viewBox="0 0 37 13"><path d="M0.500 12.500 L11.500 1 L16.500 6 L21.500 1.500 L36 12.500 Z" fill="#9a9a9a"/><path d="M16 12.500 L23.500 5.500 L26.500 7.500 L29 5.500 L36 12.500 Z" fill="#e0e0e0"/></svg><svg style="left:1901px;top:146px" width="10" height="10" viewBox="0 0 10 10"><path d="M6 1 L2 5 L6 9" stroke="#e8e8e8" stroke-width="1.600" fill="none"/></svg><svg style="left:1921px;top:144px" width="14" height="14" viewBox="0 0 14 14"><circle cx="7" cy="7" r="5.600" fill="#232323" stroke="#8c8c8c" stroke-width="1.800"/></svg><div class="a" style="left:1936px;top:150.5px;width:88px;height:1.5px;background:#4a4a4a;"></div><div class="a" style="left:2038px;top:142px;width:30px;height:18px;background:#1a1a1a;border:1px solid #2c2c2c;border-radius:2px;"></div><span class="t " style="left:2043px;top:143.75px;height:15.5px;line-height:15.5px;font-size:11.5px;color:#c8d0e0;">0</span><svg style="left:1901px;top:172px" width="10" height="10" viewBox="0 0 10 10"><path d="M1 1 L4 5 L1 9 M9 1 L6 5 L9 9" stroke="#e8e8e8" stroke-width="1.600" fill="none"/></svg><svg style="left:1921px;top:170px" width="14" height="14" viewBox="0 0 14 14"><circle cx="7" cy="7" r="5.600" fill="#232323" stroke="#8c8c8c" stroke-width="1.800"/></svg><div class="a" style="left:1936px;top:176.5px;width:88px;height:1.5px;background:#4a4a4a;"></div><div class="a" style="left:2038px;top:168px;width:30px;height:18px;background:#1a1a1a;border:1px solid #2c2c2c;border-radius:2px;"></div><span class="t " style="left:2043px;top:169.75px;height:15.5px;line-height:15.5px;font-size:11.5px;color:#c8d0e0;">0</span><svg style="left:1901px;top:198px" width="10" height="10" viewBox="0 0 10 10"><path d="M3 1 L7 5 L3 9" stroke="#e8e8e8" stroke-width="1.600" fill="none"/></svg><svg style="left:1921px;top:196px" width="14" height="14" viewBox="0 0 14 14"><circle cx="7" cy="7" r="5.600" fill="#232323" stroke="#8c8c8c" stroke-width="1.800"/></svg><div class="a" style="left:1936px;top:202.5px;width:88px;height:1.5px;background:#4a4a4a;"></div><div class="a" style="left:2038px;top:194px;width:30px;height:18px;background:#1a1a1a;border:1px solid #2c2c2c;border-radius:2px;"></div><span class="t " style="left:2043px;top:195.75px;height:15.5px;line-height:15.5px;font-size:11.5px;color:#c8d0e0;">0</span><svg style="left:2081px;top:149px" width="12" height="17" viewBox="0 0 12 17"><path d="M6 0.300 C8 1 8.800 3 8.800 6 V13.500 H3.200 V6 C3.200 3 4 1 6 0.300 Z" fill="#dcdcdc"/><path d="M3.200 9.500 L0.300 14 V15.200 H11.700 V14 L8.800 9.500 Z" fill="#dcdcdc"/><path d="M4.500 4.500 H7.500" stroke="#232323" stroke-width="0.900"/><path d="M2.500 13.700 H9.500" stroke="#232323" stroke-width="0.700" stroke-dasharray="1.500 1"/><path d="M3.500 15.200 H8.500 V16.300 H3.500 Z" fill="#dcdcdc"/></svg><svg style="left:2082px;top:170px" width="10" height="13" viewBox="0 0 10 13"><path d="M3 12 V2 M3 1 L0.800 4 M3 1 L5.200 4 M7 1 V11 M7 12 L4.800 9 M7 12 L9.200 9" stroke="#3aa0d8" stroke-width="1.300" fill="none"/></svg><svg style="left:2080px;top:186px" width="14" height="18" viewBox="0 0 14 18"><circle cx="7" cy="2.500" r="1.700" fill="none" stroke="#4a4a4a" stroke-width="1.200"/><path d="M7 4.500 V16 M4 7 H10 M1.500 11 C2 15 5 16 7 16 C9 16 12 15 12.500 11 M1.500 11 L0.500 13 M1.500 11 L3.500 12.500 M12.500 11 L13.500 13 M12.500 11 L10.500 12.500" stroke="#555" stroke-width="1.600" fill="none"/></svg><svg style="left:1900px;top:227px" width="16" height="16" viewBox="0 0 16 16"><path d="M8 1.500 V14.500 M1.500 8 H14.500" stroke="#d8d8d8" fill="none" stroke-width="1.400" stroke-width="1.600"/></svg><span class="t " style="left:1919.5px;top:229.4px;height:12.2px;line-height:12.2px;font-size:8.2px;color:#d8d8d8;letter-spacing:0.700px;font-weight:bold;">EXCITE</span><svg style="left:1973px;top:227px" width="16" height="16" viewBox="0 0 16 16"><path d="M8 1 V7 M5.500 5 L8 7.500 L10.500 5 M1 12.500 H15 M3 10 C5 11.500 11 11.500 13 10 M2 7.500 L4 9 M14 7.500 L12 9" stroke="#d8d8d8" fill="none" stroke-width="1.400"/></svg><span class="t " style="left:1992.5px;top:229.4px;height:12.2px;line-height:12.2px;font-size:8.2px;color:#d8d8d8;letter-spacing:0.700px;font-weight:bold;">BLEND</span><svg style="left:2042.5px;top:227px" width="16" height="16" viewBox="0 0 16 16"><path d="M8 1 V4.500 M8 11.500 V15 M1 8 H4.500 M11.500 8 H15 M3 3 L5.500 5.500 M10.500 10.500 L13 13 M3 13 L5.500 10.500 M10.500 5.500 L13 3" stroke="#d8d8d8" fill="none" stroke-width="1.400" stroke-width="1.600"/></svg><span class="t " style="left:2062.5px;top:229.4px;height:12.2px;line-height:12.2px;font-size:8.2px;color:#d8d8d8;letter-spacing:0.700px;font-weight:bold;">BURST</span><svg style="left:1900px;top:253px" width="16" height="16" viewBox="0 0 16 16"><circle cx="5" cy="4" r="2.600" fill="#d8d8d8"/><path d="M1 14.500 V10 C1 7.500 3 7 5 7 C7 7 9 7.500 9 10 V14.500 Z" fill="#d8d8d8"/><circle cx="11" cy="3.500" r="2.300" fill="#d8d8d8"/><path d="M9.500 6.500 C13 6 14.500 7.500 14.500 10 V13.500 H10 Z" fill="#d8d8d8"/></svg><span class="t " style="left:1919.5px;top:255.4px;height:12.2px;line-height:12.2px;font-size:8.2px;color:#d8d8d8;letter-spacing:0.700px;font-weight:bold;">CLONE</span><svg style="left:1973px;top:253px" width="16" height="16" viewBox="0 0 16 16"><path d="M1 3 L5 3 L7.500 9 L11 4" stroke="#d8d8d8" fill="none" stroke-width="1.400"/><rect x="11.500" y="2" width="3.500" height="3.500" fill="#d8d8d8"/><path d="M1 13 H15" stroke="#d8d8d8" fill="none" stroke-width="1.400" stroke-width="1.600"/></svg><span class="t " style="left:1992.5px;top:255.4px;height:12.2px;line-height:12.2px;font-size:8.2px;color:#d8d8d8;letter-spacing:0.700px;font-weight:bold;">JUMP</span><svg style="left:2042.5px;top:253px" width="16" height="16" viewBox="0 0 16 16"><path d="M2 14 L3 10 L11.500 1.500 L14.500 4.500 L6 13 Z" stroke="#d8d8d8" fill="none" stroke-width="1.400"/><path d="M10 3 L13 6" stroke="#d8d8d8" fill="none" stroke-width="1.400"/></svg><span class="t " style="left:2062.5px;top:255.4px;height:12.2px;line-height:12.2px;font-size:8.2px;color:#d8d8d8;letter-spacing:0.700px;font-weight:bold;">NAME</span><svg style="left:1900px;top:279px" width="16" height="16" viewBox="0 0 16 16"><path d="M1.500 5 V1.500 H5 M11 1.500 H14.500 V5 M14.500 11 V14.500 H11 M5 14.500 H1.500 V11" stroke="#d8d8d8" fill="none" stroke-width="1.400"/><rect x="6.500" y="6.500" width="3" height="3" fill="#d8d8d8"/></svg><span class="t " style="left:1919.5px;top:281.4px;height:12.2px;line-height:12.2px;font-size:8.2px;color:#d8d8d8;letter-spacing:0.700px;font-weight:bold;">NULL</span><svg style="left:1973px;top:279px" width="16" height="16" viewBox="0 0 16 16"><circle cx="8" cy="7.500" r="6" stroke="#d8d8d8" fill="none" stroke-width="1.400"/><path d="M8 4.500 L10.500 7.500 L8 10.500 L5.500 7.500 Z" fill="#d8d8d8"/><circle cx="8" cy="14.500" r="1.300" fill="#d8d8d8"/></svg><span class="t " style="left:1992.5px;top:281.4px;height:12.2px;line-height:12.2px;font-size:8.2px;color:#d8d8d8;letter-spacing:0.700px;font-weight:bold;">ORBIT</span><svg style="left:2042.5px;top:279px" width="16" height="16" viewBox="0 0 16 16"><path d="M3.500 12.500 L12.500 3.500" stroke="#d8d8d8" fill="none" stroke-width="1.400"/><rect x="1" y="11" width="4" height="4" stroke="#d8d8d8" fill="none" stroke-width="1.400"/><rect x="11" y="1" width="4" height="4" stroke="#d8d8d8" fill="none" stroke-width="1.400"/></svg><span class="t " style="left:2062.5px;top:281.4px;height:12.2px;line-height:12.2px;font-size:8.2px;color:#d8d8d8;letter-spacing:0.700px;font-weight:bold;">ROPE</span><svg style="left:1900px;top:305px" width="16" height="16" viewBox="0 0 16 16"><rect x="6.500" y="1" width="8.500" height="8" fill="#d8d8d8"/><path d="M4.500 5.500 V11.500 H11 M1.500 9 V14.500 H7.500" stroke="#d8d8d8" fill="none" stroke-width="1.400"/></svg><span class="t " style="left:1919.5px;top:307.4px;height:12.2px;line-height:12.2px;font-size:8.2px;color:#d8d8d8;letter-spacing:0.700px;font-weight:bold;">WARP</span><svg style="left:1973px;top:305px" width="16" height="16" viewBox="0 0 16 16"><path d="M10 3 A6 6 0 1 0 14 9" stroke="#d8d8d8" fill="none" stroke-width="1.400"/><path d="M8 0.500 L11.500 3 L8 5.500" stroke="#d8d8d8" fill="none" stroke-width="1.400"/></svg><span class="t " style="left:1992.5px;top:307.4px;height:12.2px;line-height:12.2px;font-size:8.2px;color:#d8d8d8;letter-spacing:0.700px;font-weight:bold;">SPIN</span><svg style="left:2042.5px;top:305px" width="16" height="16" viewBox="0 0 16 16"><path d="M1 8 C4 3.500 12 3.500 15 8 C12 12.500 4 12.500 1 8 Z" stroke="#d8d8d8" fill="none" stroke-width="1.400"/><circle cx="8" cy="8" r="2.200" stroke="#d8d8d8" fill="none" stroke-width="1.400"/></svg><span class="t " style="left:2062.5px;top:307.4px;height:12.2px;line-height:12.2px;font-size:8.2px;color:#d8d8d8;letter-spacing:0.700px;font-weight:bold;">STARE</span><div class="a" style="left:1895px;top:336px;width:135px;height:22px;background:#1e1e1e;border:1px solid #2e2e2e;border-radius:2px;"></div><span class="t " style="left:1902px;top:339px;height:16px;line-height:16px;font-size:12px;color:#c8c8c8;letter-spacing:-0.200px;">Task Launch</span><svg style="left:2017px;top:345.25px" width="8" height="4.5" viewBox="0 0 8 4.5"><path d="M0.5 0.5 L4 4 L7.5 0.5" fill="none" stroke="#b0b0b0" stroke-width="1.3"/></svg><div class="a" style="left:2039px;top:336px;width:59px;height:22px;background:#1c1c1c;border:1px solid #8c8c8c;"></div><svg style="left:2062px;top:340px" width="12" height="13" viewBox="0 0 12 13"><path d="M1 2.500 H11 M4 2.500 V0.800 H8 V2.500" stroke="#d0d0d0" stroke-width="1.300" fill="none"/><path d="M2 4 H10 V12.300 H2 Z M4.500 5.500 V10.800 M6 5.500 V10.800 M7.500 5.500 V10.800" stroke="#d0d0d0" stroke-width="1.200" fill="none"/></svg>
<!-- p_char -->
<div class="a" style="left:2351px;top:72px;width:205px;height:778px;background:#232323;"></div><span class="t " style="left:2392px;top:77px;height:17px;line-height:17px;font-size:13px;color:#8f8f8f;letter-spacing:0.300px;">段落</span><span class="t " style="left:2461px;top:77px;height:17px;line-height:17px;font-size:13px;color:#d0d0d0;letter-spacing:0.500px;">字符</span><svg style="left:2499px;top:82.5px" width="8" height="8" viewBox="0 0 8 8"><path d="M0 0.5 H8 M0 4 H8 M0 7.5 H8" stroke="#b4b4b4" stroke-width="1.2" fill="none"/></svg><div class="a" style="left:2460px;top:96px;width:47px;height:2px;background:#d0d0d0;"></div><svg style="left:2543px;top:81px" width="12" height="9" viewBox="0 0 12 9"><path d="M1 0.700 L5 4.500 L1 8.300 M6.500 0.700 L10.500 4.500 L6.500 8.300" stroke="#c8c8c8" stroke-width="1.600" fill="none"/></svg><div class="a" style="left:2357px;top:109px;width:121px;height:18px;background:#1b1b1b;border:1px solid #2e2e2e;border-radius:3px;"></div><div class="a" style="left:2460px;top:110px;width:1px;height:16px;background:#2e2e2e;"></div><span class="t " style="left:2364px;top:110.25px;height:15.5px;line-height:15.5px;font-size:11.5px;color:#c8c8c8;letter-spacing:-0.200px;">Microsoft YaHei UI</span><svg style="left:2465.5px;top:115.75px" width="8" height="4.5" viewBox="0 0 8 4.5"><path d="M0.5 0.5 L4 4 L7.5 0.5" fill="none" stroke="#b0b0b0" stroke-width="1.3"/></svg><div class="a" style="left:2357px;top:133px;width:121px;height:18px;background:#1b1b1b;border:1px solid #2e2e2e;border-radius:3px;"></div><div class="a" style="left:2460px;top:134px;width:1px;height:16px;background:#2e2e2e;"></div><span class="t " style="left:2364px;top:134.25px;height:15.5px;line-height:15.5px;font-size:11.5px;color:#c8c8c8;letter-spacing:-0.200px;">Light</span><svg style="left:2465.5px;top:139.75px" width="8" height="4.5" viewBox="0 0 8 4.5"><path d="M0.5 0.5 L4 4 L7.5 0.5" fill="none" stroke="#b0b0b0" stroke-width="1.3"/></svg><svg style="left:2484px;top:109px" width="18" height="20" viewBox="0 0 18 20"><path d="M11 4 L14 7 L5.500 16 L2.500 17.500 L1.800 16.800 L3 13.500 Z" fill="none" stroke="#c8c8c8" stroke-width="1.300"/><path d="M10 3 L12.500 0.800 C14 -0.500 17 2.500 15.500 4 L13.500 6.500 L15 8 L13.500 9.500 L8.500 4.500 L10 3 Z" fill="#c8c8c8"/></svg><div class="a" style="left:2521px;top:122px;width:30px;height:29px;background:#ffffff;border:1px solid #000;"></div><div class="a" style="left:2530px;top:130px;width:12px;height:12px;background:#1a1a1a;"></div><svg style="left:2521px;top:122px" width="30" height="29" viewBox="0 0 30 29"><path d="M0 29 L30 0" stroke="#d01020" stroke-width="2"/></svg><div class="a" style="left:2508px;top:108px;width:30px;height:30px;background:#ffffff;border:1px solid #111;"></div><svg style="left:2538px;top:110px" width="14" height="13" viewBox="0 0 14 13"><path d="M2 4 C6 2 10 4 10.500 9" stroke="#c8c8c8" stroke-width="1.600" fill="none"/><path d="M0.500 3.500 L4.500 1 V6 Z M10.500 12 L7.500 8 H13.500 Z" fill="#c8c8c8"/></svg><div class="a" style="left:2483px;top:133px;width:21px;height:17px;background:#ffffff;border:1px solid #ddd;"></div><div class="a" style="left:2484px;top:134px;width:19px;height:8px;background:#000;"></div><div class="a" style="left:2509px;top:138px;width:11px;height:11px;background:#ffffff;border:1px solid #ccc;"></div><svg style="left:2509px;top:138px" width="11" height="11" viewBox="0 0 11 11"><path d="M0.500 10.500 L10.500 0.500" stroke="#d01020" stroke-width="1"/></svg><div class="a" style="left:2356px;top:157px;width:196px;height:1px;background:#2e2e2e;"></div><span class="t sf" style="left:2356px;top:166px;height:13px;line-height:13px;font-size:9px;color:#c8c8c8;font-weight:bold;">T</span><span class="t sf" style="left:2362px;top:160.5px;height:19px;line-height:19px;font-size:15px;color:#c8c8c8;font-weight:bold;">T</span><span class="t " style="left:2380px;top:162.75px;height:15.5px;line-height:15.5px;font-size:11.5px;color:#2d8ceb;letter-spacing:-0.300px;">50</span><span class="t " style="left:2398px;top:161.75px;height:16.5px;line-height:16.5px;font-size:12.5px;color:#b4b4b4;letter-spacing:0;">像素</span><svg style="left:2435.5px;top:167.5px" width="7" height="6" viewBox="0 0 7 6"><path d="M0 0 H7 L3.5 6 Z" fill="#a0a0a0"/></svg><svg style="left:2461px;top:161px" width="16" height="18" viewBox="0 0 16 18"><path d="M2.500 5 V16 M2.500 4 L0.800 6.500 M2.500 4 L4.200 6.500 M2.500 17 L0.800 14.500 M2.500 17 L4.200 14.500" stroke="#c8c8c8" stroke-width="1.100" fill="none"/><path d="M6 8 L9.500 0.800 L13 8 M7.200 5.800 H11.800 M6 17.500 L9.500 10.300 L13 17.500 M7.200 15.300 H11.800" stroke="#c8c8c8" stroke-width="1.200" fill="none"/></svg><span class="t " style="left:2484px;top:162.75px;height:15.5px;line-height:15.5px;font-size:11.5px;color:#2d8ceb;letter-spacing:-0.300px;">72</span><span class="t " style="left:2501px;top:161.75px;height:16.5px;line-height:16.5px;font-size:12.5px;color:#b4b4b4;letter-spacing:0;">像素</span><svg style="left:2542.5px;top:167.5px" width="7" height="6" viewBox="0 0 7 6"><path d="M0 0 H7 L3.5 6 Z" fill="#a0a0a0"/></svg><svg style="left:2356px;top:182px" width="18" height="18" viewBox="0 0 18 18"><path d="M0.500 1.500 L4 10.500 L7.500 1.500 M5.500 10.500 L9.500 1.500" stroke="#c8c8c8" stroke-width="1.200" fill="none"/><path d="M8 10.500 L11.500 1.500 L15 10.500 M9.300 7.500 H13.700" stroke="#c8c8c8" stroke-width="1.200" fill="none"/><path d="M15 14.500 H9 M9 14.500 L11 12.800 M9 14.500 L11 16.200" stroke="#c8c8c8" stroke-width="1.100" fill="none"/></svg><span class="t " style="left:2383px;top:181.75px;height:16.5px;line-height:16.5px;font-size:12.5px;color:#4a4a4a;letter-spacing:0;">度量标准</span><svg style="left:2435.5px;top:187.5px" width="7" height="6" viewBox="0 0 7 6"><path d="M0 0 H7 L3.5 6 Z" fill="#a0a0a0"/></svg><div class="a" style="left:2463px;top:183px;width:18px;height:11px;background:#c8c8c8;"></div><span class="t " style="left:2464.5px;top:182.25px;height:13.5px;line-height:13.5px;font-size:9.5px;color:#232323;font-weight:bold;letter-spacing:-0.500px;">VA</span><svg style="left:2463px;top:196px" width="18" height="5" viewBox="0 0 18 5"><path d="M0.500 2.500 H17.500 M0.500 2.500 L2.500 0.500 M0.500 2.500 L2.500 4.500 M17.500 2.500 L15.500 0.500 M17.500 2.500 L15.500 4.500" stroke="#c8c8c8" stroke-width="1" fill="none"/></svg><span class="t " style="left:2485px;top:182.25px;height:15.5px;line-height:15.5px;font-size:11.5px;color:#2d8ceb;letter-spacing:-0.300px;">400</span><svg style="left:2542.5px;top:187.5px" width="7" height="6" viewBox="0 0 7 6"><path d="M0 0 H7 L3.5 6 Z" fill="#a0a0a0"/></svg><div class="a" style="left:2356px;top:207px;width:196px;height:1px;background:#2e2e2e;"></div><svg style="left:2358px;top:215px" width="15" height="12" viewBox="0 0 15 12"><path d="M0 1 H15 M0 6 H15 M0 11 H15" stroke="#c8c8c8" stroke-width="2"/></svg><span class="t " style="left:2381px;top:213.25px;height:16.5px;line-height:16.5px;font-size:12.5px;color:#b4b4b4;letter-spacing:0.500px;">- 像素</span><svg style="left:2435.5px;top:219px" width="7" height="6" viewBox="0 0 7 6"><path d="M0 0 H7 L3.5 6 Z" fill="#a0a0a0"/></svg><div class="a" style="left:2446px;top:212px;width:106px;height:18px;background:#1b1b1b;border:1px solid #2e2e2e;border-radius:3px;"></div><svg style="left:2538.5px;top:219.75px" width="8" height="4.5" viewBox="0 0 8 4.5"><path d="M0.5 0.5 L4 4 L7.5 0.5" fill="none" stroke="#b0b0b0" stroke-width="1.3"/></svg><div class="a" style="left:2356px;top:237px;width:196px;height:1px;background:#2e2e2e;"></div><svg style="left:2357px;top:245px" width="5" height="15" viewBox="0 0 5 15"><path d="M2.500 1 V14 M2.500 0.500 L0.500 3 M2.500 0.500 L4.500 3 M2.500 14.500 L0.500 12 M2.500 14.500 L4.500 12" stroke="#c8c8c8" stroke-width="1.100" fill="none"/></svg><span class="t sf" style="left:2363px;top:241px;height:21px;line-height:21px;font-size:17px;color:#c8c8c8;font-weight:bold;">T</span><span class="t " style="left:2380px;top:243.75px;height:15.5px;line-height:15.5px;font-size:11.5px;color:#2d8ceb;letter-spacing:-0.300px;">100</span><span class="t " style="left:2401px;top:244.5px;height:15px;line-height:15px;font-size:11px;color:#b4b4b4;">%</span><svg style="left:2435.5px;top:248.5px" width="7" height="6" viewBox="0 0 7 6"><path d="M0 0 H7 L3.5 6 Z" fill="#a0a0a0"/></svg><span class="t sf" style="left:2463px;top:241px;height:21px;line-height:21px;font-size:17px;color:#c8c8c8;font-weight:bold;">T</span><svg style="left:2462px;top:258px" width="17" height="5" viewBox="0 0 17 5"><path d="M0.500 2.500 H16.500 M0.500 2.500 L2.500 0.500 M0.500 2.500 L2.500 4.500 M16.500 2.500 L14.500 0.500 M16.500 2.500 L14.500 4.500" stroke="#c8c8c8" stroke-width="1" fill="none"/></svg><span class="t " style="left:2484px;top:243.75px;height:15.5px;line-height:15.5px;font-size:11.5px;color:#2d8ceb;letter-spacing:-0.300px;">100</span><span class="t " style="left:2505px;top:244.5px;height:15px;line-height:15px;font-size:11px;color:#b4b4b4;">%</span><svg style="left:2542.5px;top:248.5px" width="7" height="6" viewBox="0 0 7 6"><path d="M0 0 H7 L3.5 6 Z" fill="#a0a0a0"/></svg><span class="t " style="left:2356px;top:266px;height:16px;line-height:16px;font-size:12px;color:#c8c8c8;">A</span><span class="t " style="left:2364.5px;top:265.75px;height:12.5px;line-height:12.5px;font-size:8.5px;color:#c8c8c8;">a</span><svg style="left:2356px;top:279px" width="16" height="8" viewBox="0 0 16 8"><path d="M0 0.500 H12 M12.500 7.500 V2 M12.500 1.500 L10.800 3.500 M12.500 1.500 L14.200 3.500" stroke="#c8c8c8" stroke-width="1" fill="none"/></svg><span class="t " style="left:2381px;top:266.25px;height:15.5px;line-height:15.5px;font-size:11.5px;color:#2d8ceb;">0</span><span class="t " style="left:2392px;top:265.75px;height:16.5px;line-height:16.5px;font-size:12.5px;color:#b4b4b4;letter-spacing:0;">像素</span><svg style="left:2435.5px;top:270px" width="7" height="6" viewBox="0 0 7 6"><path d="M0 0 H7 L3.5 6 Z" fill="#a0a0a0"/></svg><div class="a" style="left:2465px;top:267.5px;width:1px;height:11px;border-left:1px dotted #c8c8c8;"></div><div class="a" style="left:2477px;top:267.5px;width:1px;height:11px;border-left:1px dotted #c8c8c8;"></div><span class="t " style="left:2466.5px;top:266.25px;height:13.5px;line-height:13.5px;font-size:9.5px;color:#c8c8c8;">あ</span><svg style="left:2464px;top:278.5px" width="16" height="5" viewBox="0 0 16 5"><path d="M0.500 2.500 H5.500 M5.500 2.500 L3.500 0.500 M5.500 2.500 L3.500 4.500 M15.500 2.500 H10.500 M10.500 2.500 L12.500 0.500 M10.500 2.500 L12.500 4.500" stroke="#c8c8c8" stroke-width="1" fill="none"/></svg><span class="t " style="left:2485px;top:265.75px;height:15.5px;line-height:15.5px;font-size:11.5px;color:#2d8ceb;">0</span><span class="t " style="left:2496px;top:266.5px;height:15px;line-height:15px;font-size:11px;color:#b4b4b4;">%</span><svg style="left:2542.5px;top:270px" width="7" height="6" viewBox="0 0 7 6"><path d="M0 0 H7 L3.5 6 Z" fill="#a0a0a0"/></svg><div class="a" style="left:2356px;top:290px;width:196px;height:1px;background:#2e2e2e;"></div><span class="t sf" style="left:2382px;top:295px;height:20px;line-height:20px;font-size:16px;color:#c8c8c8;font-weight:bold;">T</span><span class="t sf" style="left:2408px;top:295px;height:20px;line-height:20px;font-size:16px;color:#c8c8c8;font-style:italic;font-weight:bold;">T</span><span class="t sf" style="left:2433px;top:295px;height:20px;line-height:20px;font-size:16px;color:#c8c8c8;letter-spacing:-0.500px;font-weight:bold;">TT</span><span class="t sf" style="left:2459px;top:295px;height:20px;line-height:20px;font-size:16px;color:#c8c8c8;font-weight:bold;">T</span><span class="t sf" style="left:2469.5px;top:298.5px;height:16px;line-height:16px;font-size:12px;color:#c8c8c8;font-weight:bold;">T</span><span class="t sf" style="left:2490px;top:295px;height:20px;line-height:20px;font-size:16px;color:#c8c8c8;font-weight:bold;">T</span><span class="t sf" style="left:2501.5px;top:295.5px;height:11px;line-height:11px;font-size:7px;color:#c8c8c8;font-weight:bold;">1</span><span class="t sf" style="left:2516px;top:295px;height:20px;line-height:20px;font-size:16px;color:#c8c8c8;font-weight:bold;">T</span><span class="t sf" style="left:2527.5px;top:303.5px;height:11px;line-height:11px;font-size:7px;color:#c8c8c8;font-weight:bold;">1</span><div class="a" style="left:2362.5px;top:325.5px;width:13.5px;height:13.5px;border:2px solid #9a9a9a;border-radius:2px;"></div><span class="t " style="left:2381px;top:324.25px;height:16.5px;line-height:16.5px;font-size:12.5px;color:#b4b4b4;letter-spacing:0;">连字</span><div class="a" style="left:2460.5px;top:325.5px;width:13.5px;height:13.5px;border:2px solid #9a9a9a;border-radius:2px;"></div><span class="t " style="left:2478px;top:324.25px;height:16.5px;line-height:16.5px;font-size:12.5px;color:#b4b4b4;letter-spacing:1px;">印地语数字</span>
<!-- p_timeline -->
<div class="a" style="left:0px;top:850px;width:2556px;height:5px;background:#161210;"></div><div class="a" style="left:0px;top:854px;width:2556px;height:1px;background:#15263a;"></div><div class="a" style="left:0px;top:855px;width:2556px;height:1px;background:#3f84cc;"></div><div class="a" style="left:0px;top:856px;width:2556px;height:1px;background:#1d2a38;"></div><div class="a" style="left:0px;top:857px;width:2556px;height:541px;background:#232323;"></div><svg style="left:10px;top:866px" width="6" height="6" viewBox="0 0 6 6"><path d="M0.500 0.500 L5.500 5.500 M5.500 0.500 L0.500 5.500" stroke="#a0a0a0" stroke-width="1.100"/></svg><div class="a" style="left:25px;top:862px;width:10px;height:10px;background:#d2b48c;"></div><span class="t " style="left:48px;top:860px;height:17px;line-height:17px;font-size:13px;color:#d0d0d0;letter-spacing:0;">合成</span><span class="t " style="left:74.5px;top:861.5px;height:15px;line-height:15px;font-size:11px;color:#d0d0d0;">1</span><svg style="left:91px;top:865.5px" width="8" height="8" viewBox="0 0 8 8"><path d="M0 0.5 H8 M0 4 H8 M0 7.5 H8" stroke="#b4b4b4" stroke-width="1.2" fill="none"/></svg><div class="a" style="left:10px;top:879px;width:89px;height:2px;background:#d0d0d0;"></div><span class="t " style="left:139px;top:860px;height:17px;line-height:17px;font-size:13px;color:#8f8f8f;letter-spacing:0.200px;">渲染队列</span><span class="t sf" style="left:37px;top:883px;height:21px;line-height:21px;font-size:17px;color:#2d8ceb;font-weight:bold;letter-spacing:1.100px;">00000</span><span class="t " style="left:10px;top:902.5px;height:14px;line-height:14px;font-size:10px;color:#1d4f8c;letter-spacing:0.100px;">0:00:00:00 (25.00 fps)</span><div class="a" style="left:126px;top:890px;width:782px;height:19px;background:#161616;border:1px solid #2a2a2a;"></div><svg style="left:131px;top:893px" width="18" height="13" viewBox="0 0 18 13"><circle cx="7.500" cy="4.500" r="3.500" fill="none" stroke="#c0c0c0" stroke-width="1.300"/><path d="M5 7 L0.800 11.500" stroke="#c0c0c0" stroke-width="1.500"/><path d="M11.500 8 H16.500 L14 10.500 Z" fill="#c0c0c0"/></svg><svg style="left:923px;top:892px" width="19" height="17" viewBox="0 0 19 17"><path d="M0.500 4 H6 M4 4 H9 V10 H14 M9 4 H14" stroke="#c8c8c8" stroke-width="1.200" fill="none"/><circle cx="4" cy="4" r="1.800" fill="#c8c8c8"/><rect x="11" y="2" width="5" height="4" fill="#c8c8c8"/><rect x="11" y="8" width="5" height="4" fill="#c8c8c8"/><path d="M12.500 14 H17 L14.700 16.500 Z" fill="#c8c8c8"/></svg><svg style="left:956px;top:891px" width="20" height="18" viewBox="0 0 20 18"><path d="M5 0 V10 M0 5 H10 M1.500 1.500 L8.500 8.500 M8.500 1.500 L1.500 8.500" stroke="#c8c8c8" stroke-width="1.100"/><circle cx="5" cy="5" r="2.200" fill="#c8c8c8"/><path d="M12.500 7.500 L18.500 10 V15 L12.500 17.500 L7 15 V10 Z M7 10 L12.500 12.500 L18.500 10 M12.500 12.500 V17.500" fill="#232323" stroke="#c8c8c8" stroke-width="1.300"/></svg><svg style="left:991px;top:893px" width="18" height="14" viewBox="0 0 18 14"><path d="M3.500 7 A5.500 5.500 0 0 1 14.500 7 Z" fill="#c8c8c8"/><path d="M9 1.500 V10" stroke="#232323" stroke-width="1.200"/><rect x="0" y="8" width="18" height="5" fill="#8c8c8c"/><path d="M9 6 V11" stroke="#c8c8c8" stroke-width="1.500"/></svg><svg style="left:1018px;top:892px" width="17" height="16" viewBox="0 0 17 16"><rect x="4" y="0.500" width="12" height="11" fill="#c8c8c8"/><path d="M6 2 V10 M14 2 V10" stroke="#232323" stroke-width="1" stroke-dasharray="1.500 1"/><path d="M2.500 3 V13.500 H13 M0.500 5.500 V15.500 H10.500" stroke="#c8c8c8" stroke-width="1.200" fill="none"/></svg><svg style="left:1044px;top:892px" width="17" height="16" viewBox="0 0 17 16"><circle cx="10.500" cy="6" r="5.500" fill="#8c8c8c" stroke="#c8c8c8" stroke-width="1"/><circle cx="8" cy="8" r="5.500" fill="none" stroke="#c8c8c8" stroke-width="1"/><circle cx="6" cy="10" r="5.500" fill="none" stroke="#c8c8c8" stroke-width="1"/></svg><svg style="left:1077px;top:892px" width="18" height="16" viewBox="0 0 18 16"><rect x="1.500" y="2.500" width="15" height="12.500" fill="none" stroke="#c8c8c8" stroke-width="1.300"/><path d="M5 0.500 V2.500 M13 0.500 V2.500 M0 6 H1.500 M0 11 H1.500" stroke="#c8c8c8" stroke-width="1.200"/><path d="M3 4.500 C8 4.500 8 13 15 13" stroke="#c8c8c8" stroke-width="1.200" fill="none"/></svg><div class="a" style="left:0px;top:918px;width:1110px;height:1px;background:#121212;"></div><div class="a" style="left:0px;top:919px;width:1110px;height:18px;background:#333333;"></div><div class="a" style="left:0px;top:937px;width:1110px;height:1px;background:#121212;"></div><div class="a" style="left:67px;top:921px;width:1px;height:14px;background:#1a1a1a;"></div><div class="a" style="left:100px;top:921px;width:1px;height:14px;background:#1a1a1a;"></div><div class="a" style="left:131px;top:921px;width:1px;height:14px;background:#1a1a1a;"></div><div class="a" style="left:496px;top:921px;width:1px;height:14px;background:#1a1a1a;"></div><div class="a" style="left:674px;top:921px;width:1px;height:14px;background:#1a1a1a;"></div><div class="a" style="left:811px;top:921px;width:1px;height:14px;background:#1a1a1a;"></div><div class="a" style="left:977px;top:921px;width:1px;height:14px;background:#1a1a1a;"></div><div class="a" style="left:1094px;top:921px;width:1px;height:14px;background:#1a1a1a;"></div><svg style="left:4px;top:923.5px" width="12" height="9" viewBox="0 0 12 9"><path d="M0.300 4.500 C3 0 9 0 11.700 4.500 C9 9 3 9 0.300 4.500 Z" fill="#d0d0d0"/><circle cx="6" cy="4.300" r="2.400" fill="#333"/><circle cx="5.200" cy="3.500" r="0.900" fill="#d0d0d0"/></svg><svg style="left:20px;top:922px" width="11" height="12" viewBox="0 0 11 12"><path d="M0 4 H2.500 L6 0.500 V11.500 L2.500 8 H0 Z" fill="#d0d0d0"/><path d="M7.500 3.500 A3 3 0 0 1 7.500 8.500 M8.500 1.500 A5.500 5.500 0 0 1 8.500 10.500" stroke="#d0d0d0" stroke-width="1" fill="none"/></svg><svg style="left:36px;top:924.5px" width="7" height="7" viewBox="0 0 7 7"><circle cx="3.500" cy="3.500" r="3.300" fill="#d0d0d0"/></svg><svg style="left:50px;top:921.5px" width="10" height="12" viewBox="0 0 10 12"><path d="M2.500 5.500 V3.500 A2.500 2.500 0 0 1 7.500 3.500 V5.500" stroke="#d0d0d0" stroke-width="1.400" fill="none"/><rect x="0.500" y="5.500" width="9" height="6.500" fill="#d0d0d0"/><rect x="4.200" y="7.500" width="1.600" height="2.500" fill="#333"/></svg><svg style="left:81px;top:921.5px" width="13" height="13" viewBox="0 0 13 13"><path d="M0.500 0.500 H6 L12.500 7 L7 12.500 L0.500 6 Z" fill="#d0d0d0"/><circle cx="3.300" cy="3.300" r="1.200" fill="#333"/></svg><span class="t " style="left:106px;top:922px;height:14px;line-height:14px;font-size:10px;color:#a8a8a8;">#</span><span class="t " style="left:139px;top:919.5px;height:17px;line-height:17px;font-size:13px;color:#d0d0d0;letter-spacing:0.200px;">图层名称</span><span class="t " style="left:503px;top:919.5px;height:17px;line-height:17px;font-size:13px;color:#d0d0d0;letter-spacing:0.500px;">注释</span><svg style="left:680px;top:923px" width="13" height="10" viewBox="0 0 13 10"><path d="M2 5 A4.500 4.500 0 0 1 11 5 Z" fill="#c8c8c8"/><path d="M0 6.500 H13 M6.500 1 V9 M5 9 H8" stroke="#c8c8c8" stroke-width="1.100" fill="none"/><path d="M6.500 1 V5" stroke="#232323" stroke-width="1"/></svg><svg style="left:696px;top:922.5px" width="11" height="11" viewBox="0 0 11 11"><circle cx="5.500" cy="5.500" r="2" fill="none" stroke="#c8c8c8" stroke-width="1.200"/><path d="M5.500 0 V2.200 M5.500 8.800 V11 M0 5.500 H2.200 M8.800 5.500 H11 M1.600 1.600 L3.200 3.200 M7.800 7.800 L9.400 9.400 M1.600 9.400 L3.200 7.800 M7.800 3.200 L9.400 1.600" stroke="#c8c8c8" stroke-width="1.100"/></svg><svg style="left:710px;top:923px" width="10" height="10" viewBox="0 0 10 10"><path d="M0.500 0.500 L9.500 9.500" stroke="#c8c8c8" stroke-width="1.300" stroke-dasharray="2 1"/></svg><span class="t " style="left:725px;top:919.25px;height:16.5px;line-height:16.5px;font-size:12.5px;color:#c8c8c8;font-style:italic;letter-spacing:-0.500px;">fx</span><svg style="left:739px;top:922.5px" width="13" height="11" viewBox="0 0 13 11"><rect x="0.500" y="0.500" width="12" height="10" fill="none" stroke="#c8c8c8" stroke-width="1.100"/><rect x="3" y="2.500" width="7" height="6" fill="#c8c8c8"/><path d="M1.800 1 V10 M11.200 1 V10" stroke="#c8c8c8" stroke-width="0.800" stroke-dasharray="1 1"/></svg><svg style="left:754px;top:922px" width="14" height="12" viewBox="0 0 14 12"><circle cx="8.500" cy="4.500" r="4" fill="#8c8c8c" stroke="#c8c8c8" stroke-width="0.900"/><circle cx="6.500" cy="6" r="4" fill="none" stroke="#c8c8c8" stroke-width="0.900"/><circle cx="4.500" cy="7.500" r="4" fill="none" stroke="#c8c8c8" stroke-width="0.900"/></svg><svg style="left:770px;top:923px" width="10" height="10" viewBox="0 0 10 10"><circle cx="5" cy="5" r="4.400" fill="none" stroke="#c8c8c8" stroke-width="1.100"/><path d="M1.900 8.100 A4.400 4.400 0 0 0 8.100 1.900 Z" fill="#c8c8c8"/></svg><svg style="left:785px;top:922px" width="11" height="12" viewBox="0 0 11 12"><path d="M5.500 0.500 L10.500 3 V9 L5.500 11.500 L0.500 9 V3 Z M0.500 3 L5.500 5.500 L10.500 3 M5.500 5.500 V11.500" fill="none" stroke="#c8c8c8" stroke-width="1.100"/></svg><span class="t " style="left:819px;top:919.5px;height:17px;line-height:17px;font-size:13px;color:#d0d0d0;letter-spacing:0;">模式</span><span class="t " style="left:893px;top:921px;height:15px;line-height:15px;font-size:11px;color:#909090;">T</span><span class="t " style="left:911px;top:920.75px;height:15.5px;line-height:15.5px;font-size:11.5px;color:#909090;letter-spacing:-0.200px;">TrkMat</span><span class="t " style="left:984px;top:919.5px;height:17px;line-height:17px;font-size:13px;color:#d0d0d0;letter-spacing:0;">父级</span><div class="a" style="left:0px;top:958px;width:1110px;height:340px;background:#262626;"></div><div class="a" style="left:0px;top:957px;width:1110px;height:1px;background:#1b1b1b;"></div><div class="a" style="left:0px;top:977px;width:1110px;height:1px;background:#1b1b1b;"></div><div class="a" style="left:0px;top:997px;width:1110px;height:1px;background:#1b1b1b;"></div><div class="a" style="left:0px;top:1017px;width:1110px;height:1px;background:#1b1b1b;"></div><div class="a" style="left:0px;top:1037px;width:1110px;height:1px;background:#1b1b1b;"></div><div class="a" style="left:0px;top:1057px;width:1110px;height:1px;background:#1b1b1b;"></div><div class="a" style="left:0px;top:1077px;width:1110px;height:1px;background:#1b1b1b;"></div><div class="a" style="left:0px;top:1097px;width:1110px;height:1px;background:#1b1b1b;"></div><div class="a" style="left:0px;top:1117px;width:1110px;height:1px;background:#1b1b1b;"></div><div class="a" style="left:0px;top:1137px;width:1110px;height:1px;background:#1b1b1b;"></div><div class="a" style="left:0px;top:1157px;width:1110px;height:1px;background:#1b1b1b;"></div><div class="a" style="left:0px;top:1177px;width:1110px;height:1px;background:#1b1b1b;"></div><div class="a" style="left:0px;top:1197px;width:1110px;height:1px;background:#1b1b1b;"></div><div class="a" style="left:0px;top:1217px;width:1110px;height:1px;background:#1b1b1b;"></div><div class="a" style="left:0px;top:1237px;width:1110px;height:1px;background:#1b1b1b;"></div><div class="a" style="left:0px;top:1257px;width:1110px;height:1px;background:#1b1b1b;"></div><div class="a" style="left:0px;top:1277px;width:1110px;height:1px;background:#1b1b1b;"></div><div class="a" style="left:0px;top:1297px;width:1110px;height:1px;background:#1b1b1b;"></div><div class="a" style="left:0px;top:938px;width:1110px;height:19px;background:#2e2e2e;"></div><div class="a" style="left:3px;top:939.5px;width:15px;height:14px;background:#1b1b1b;"></div><svg style="left:4.5px;top:942px" width="12" height="9" viewBox="0 0 12 9"><path d="M0.300 4.500 C3 0 9 0 11.700 4.500 C9 9 3 9 0.300 4.500 Z" fill="#d8d8d8"/><circle cx="6" cy="4.300" r="2.400" fill="#1b1b1b"/><circle cx="5.200" cy="3.500" r="0.900" fill="#d8d8d8"/></svg><div class="a" style="left:34px;top:940px;width:13px;height:14px;background:#1d1d1d;"></div><div class="a" style="left:49px;top:940px;width:13px;height:14px;background:#1d1d1d;"></div><svg style="left:72px;top:943.5px" width="8" height="8" viewBox="0 0 8 8"><path d="M0 0 H8 L4 8 Z" fill="#c8c8c8"/></svg><div class="a" style="left:85px;top:940px;width:15px;height:15px;background:#6b7de8;"></div><span class="t sf" style="left:107px;top:940px;height:16px;line-height:16px;font-size:12px;color:#d8d8d8;font-weight:bold;">1</span><svg style="left:138px;top:941.5px" width="12" height="12" viewBox="0 0 12 12"><path d="M6 0.300 L7.500 4.300 L11.800 4.500 L8.400 7.200 L9.600 11.400 L6 9 L2.400 11.400 L3.600 7.200 L0.200 4.500 L4.500 4.300 Z" fill="#e0e0e0"/></svg><span class="t sf" style="left:157px;top:941px;height:15px;line-height:15px;font-size:11px;color:#d8d8d8;font-weight:bold;letter-spacing:1.200px;word-spacing:2px;">形状图层 2</span><div class="a" style="left:679px;top:940px;width:14px;height:14px;background:#262626;"></div><svg style="left:680px;top:942px" width="13" height="10" viewBox="0 0 13 10"><path d="M2 5 A4.500 4.500 0 0 1 11 5 Z" fill="#c8c8c8"/><path d="M0 6.500 H13 M6.500 1 V9 M5 9 H8" stroke="#c8c8c8" stroke-width="1.100" fill="none"/><path d="M6.500 1 V5" stroke="#232323" stroke-width="1"/></svg><div class="a" style="left:695px;top:940px;width:13px;height:14px;background:#262626;"></div><svg style="left:696px;top:941.5px" width="11" height="11" viewBox="0 0 11 11"><circle cx="5.500" cy="5.500" r="2" fill="none" stroke="#5a5a5a" stroke-width="1.200"/><path d="M5.500 0 V2.200 M5.500 8.800 V11 M0 5.500 H2.200 M8.800 5.500 H11 M1.600 1.600 L3.200 3.200 M7.800 7.800 L9.400 9.400 M1.600 9.400 L3.200 7.800 M7.800 3.200 L9.400 1.600" stroke="#5a5a5a" stroke-width="1.100"/></svg><div class="a" style="left:709px;top:940px;width:14px;height:14px;background:#262626;"></div><svg style="left:711px;top:942px" width="11" height="11" viewBox="0 0 11 11"><path d="M0.500 10.500 L10.500 0.500" stroke="#d0d0d0" stroke-width="1.300"/></svg><div class="a" style="left:754px;top:940px;width:13px;height:14px;background:#222;"></div><div class="a" style="left:769px;top:940px;width:13px;height:14px;background:#222;"></div><div class="a" style="left:784px;top:940px;width:13px;height:14px;background:#222;"></div><div class="a" style="left:815px;top:939px;width:69px;height:17px;background:#1c1c1c;border:1px solid #2c2c2c;"></div><span class="t " style="left:822px;top:940px;height:16px;line-height:16px;font-size:12px;color:#d0d0d0;">正常</span><svg style="left:871px;top:945.8px" width="9" height="4" viewBox="0 0 9 4"><path d="M0.5 0.5 L4.5 3.5 L8.5 0.5" fill="none" stroke="#c8c8c8" stroke-width="1.1"/></svg><div class="a" style="left:888px;top:940px;width:14px;height:14px;background:#222;"></div><svg style="left:982px;top:941px" width="12" height="12" viewBox="0 0 12 12"><path d="M5.8 7.1 L6.0 7.0 L6.0 6.8 L6.1 6.6 L6.1 6.4 L6.0 6.2 L5.9 5.9 L5.8 5.7 L5.5 5.6 L5.3 5.5 L5.0 5.4 L4.6 5.4 L4.3 5.5 L4.0 5.7 L3.7 6.0 L3.5 6.3 L3.4 6.7 L3.3 7.1 L3.3 7.5 L3.5 7.9 L3.7 8.3 L4.1 8.7 L4.5 9.0 L4.9 9.1 L5.5 9.2 L6.0 9.2 L6.5 9.0 L7.0 8.7 L7.5 8.3 L7.8 7.8 L8.0 7.2 L8.1 6.6 L8.1 5.9 L7.9 5.3 L7.5 4.7 L7.0 4.2 L6.4 3.8 L5.8 3.5 L5.0 3.4 L4.3 3.4 L3.5 3.7 L2.8 4.0 L2.2 4.6 L1.8 5.2 L1.4 6.0 L1.3 6.9 L1.3 7.7 L1.5 8.6 L2.0 9.4 L2.6 10.1 L3.3 10.6 L4.2 11.0 L5.1 11.2 L6.1 11.2 L7.1 11.0 L8.0 10.5 L8.8 9.9 L9.4 9.0 L9.9 8.1 L10.1 7.0 L10.1 5.9 Q10.9 2.4 11.3 0.8" fill="none" stroke="#a8a8a8" stroke-width="1"/></svg><div class="a" style="left:1001px;top:939px;width:89px;height:17px;background:#1c1c1c;border:1px solid #2c2c2c;"></div><span class="t " style="left:1008px;top:940px;height:16px;line-height:16px;font-size:12px;color:#d0d0d0;">无</span><svg style="left:1077px;top:945.8px" width="9" height="4" viewBox="0 0 9 4"><path d="M0.5 0.5 L4.5 3.5 L8.5 0.5" fill="none" stroke="#c8c8c8" stroke-width="1.1"/></svg><svg style="left:92px;top:964px" width="8" height="8" viewBox="0 0 8 8"><path d="M0 0 H8 L4 8 Z" fill="#c8c8c8"/></svg><span class="t sf" style="left:112.5px;top:961px;height:15px;line-height:15px;font-size:11px;color:#c0c0c0;letter-spacing:0.400px;word-spacing:2px;">内容</span><span class="t sf" style="left:765px;top:958.5px;height:15px;line-height:15px;font-size:11px;color:#a8a8a8;letter-spacing:0.500px;">添加:</span><svg style="left:795px;top:959.5px" width="12" height="12" viewBox="0 0 12 12"><circle cx="6" cy="6" r="5.600" fill="#d8d8d8"/><path d="M4.500 3 L9 6 L4.500 9 Z" fill="#232323"/></svg><div class="a" style="left:3px;top:979.5px;width:15px;height:14px;background:#1b1b1b;"></div><svg style="left:4.5px;top:982px" width="12" height="9" viewBox="0 0 12 9"><path d="M0.300 4.500 C3 0 9 0 11.700 4.500 C9 9 3 9 0.300 4.500 Z" fill="#d8d8d8"/><circle cx="6" cy="4.300" r="2.400" fill="#1b1b1b"/><circle cx="5.200" cy="3.500" r="0.900" fill="#d8d8d8"/></svg><svg style="left:112px;top:984px" width="8" height="8" viewBox="0 0 8 8"><path d="M0 0 H8 L4 8 Z" fill="#c8c8c8"/></svg><span class="t sf" style="left:132.5px;top:981px;height:15px;line-height:15px;font-size:11px;color:#c0c0c0;letter-spacing:0.400px;word-spacing:2px;">椭圆 1</span><div class="a" style="left:680px;top:979px;width:126px;height:17px;background:#1c1c1c;border:1px solid #2c2c2c;"></div><span class="t " style="left:687px;top:980px;height:16px;line-height:16px;font-size:12px;color:#d0d0d0;">正常</span><svg style="left:793px;top:985.8px" width="9" height="4" viewBox="0 0 9 4"><path d="M0.5 0.5 L4.5 3.5 L8.5 0.5" fill="none" stroke="#c8c8c8" stroke-width="1.1"/></svg><div class="a" style="left:3px;top:999.5px;width:15px;height:14px;background:#1b1b1b;"></div><svg style="left:4.5px;top:1002px" width="12" height="9" viewBox="0 0 12 9"><path d="M0.300 4.500 C3 0 9 0 11.700 4.500 C9 9 3 9 0.300 4.500 Z" fill="#d8d8d8"/><circle cx="6" cy="4.300" r="2.400" fill="#1b1b1b"/><circle cx="5.200" cy="3.500" r="0.900" fill="#d8d8d8"/></svg><svg style="left:132px;top:1004px" width="8" height="8" viewBox="0 0 8 8"><path d="M0 0 H8 L4 8 Z" fill="#c8c8c8"/></svg><span class="t sf" style="left:152.5px;top:1001px;height:15px;line-height:15px;font-size:11px;color:#c0c0c0;letter-spacing:0.400px;word-spacing:2px;">路径 1</span><div class="a" style="left:680px;top:999px;width:16px;height:15px;background:#16202c;"></div><svg style="left:681px;top:1001px" width="14" height="12" viewBox="0 0 14 12"><path d="M2.500 2 H11.500 M13 9 H2 M1.500 9 L4 7 M1.500 9 L4 11" stroke="#3a8ae0" stroke-width="1.100" fill="none"/><rect x="0.500" y="0.500" width="3" height="3" fill="#16202c" stroke="#3a8ae0" stroke-width="0.900"/><rect x="10.500" y="0.500" width="3" height="3" fill="#16202c" stroke="#3a8ae0" stroke-width="0.900"/></svg><div class="a" style="left:698px;top:999px;width:16px;height:15px;background:#1c1c1c;"></div><svg style="left:699px;top:1001px" width="14" height="12" viewBox="0 0 14 12"><path d="M2.500 2 H11.500 M1 9 H12 M12.500 9 L10 7 M12.500 9 L10 11" stroke="#d0d0d0" stroke-width="1.100" fill="none"/><circle cx="2" cy="2" r="1.500" fill="#1c1c1c" stroke="#d0d0d0" stroke-width="0.900"/><circle cx="12" cy="2" r="1.500" fill="#1c1c1c" stroke="#d0d0d0" stroke-width="0.900"/></svg><svg style="left:169px;top:1020px" width="12" height="14" viewBox="0 0 12 14"><circle cx="6" cy="8" r="4.800" fill="none" stroke="#c0c0c0" stroke-width="1.300"/><path d="M4 1 H8 M6 1 V3 M6 8 L8.500 5" stroke="#c0c0c0" stroke-width="1.200" fill="none"/></svg><span class="t sf" style="left:188px;top:1021px;height:15px;line-height:15px;font-size:11px;color:#c0c0c0;letter-spacing:0.400px;">路径</span><div class="a" style="left:3px;top:1039.5px;width:15px;height:14px;background:#1b1b1b;"></div><svg style="left:132px;top:1044px" width="8" height="8" viewBox="0 0 8 8"><path d="M0 0 V8 L8 4 Z" fill="#c8c8c8"/></svg><span class="t sf" style="left:152.5px;top:1041px;height:15px;line-height:15px;font-size:11px;color:#c0c0c0;letter-spacing:0.400px;word-spacing:2px;">描边 1</span><div class="a" style="left:680px;top:1039px;width:126px;height:17px;background:#1c1c1c;border:1px solid #2c2c2c;"></div><span class="t " style="left:687px;top:1040px;height:16px;line-height:16px;font-size:12px;color:#d0d0d0;">正常</span><svg style="left:793px;top:1045.8px" width="9" height="4" viewBox="0 0 9 4"><path d="M0.5 0.5 L4.5 3.5 L8.5 0.5" fill="none" stroke="#c8c8c8" stroke-width="1.1"/></svg><div class="a" style="left:3px;top:1059.5px;width:15px;height:14px;background:#1b1b1b;"></div><svg style="left:4.5px;top:1062px" width="12" height="9" viewBox="0 0 12 9"><path d="M0.300 4.500 C3 0 9 0 11.700 4.500 C9 9 3 9 0.300 4.500 Z" fill="#d8d8d8"/><circle cx="6" cy="4.300" r="2.400" fill="#1b1b1b"/><circle cx="5.200" cy="3.500" r="0.900" fill="#d8d8d8"/></svg><svg style="left:132px;top:1064px" width="8" height="8" viewBox="0 0 8 8"><path d="M0 0 V8 L8 4 Z" fill="#c8c8c8"/></svg><span class="t sf" style="left:152.5px;top:1061px;height:15px;line-height:15px;font-size:11px;color:#c0c0c0;letter-spacing:0.400px;word-spacing:2px;">填充 1</span><div class="a" style="left:680px;top:1059px;width:126px;height:17px;background:#1c1c1c;border:1px solid #2c2c2c;"></div><span class="t " style="left:687px;top:1060px;height:16px;line-height:16px;font-size:12px;color:#d0d0d0;">正常</span><svg style="left:793px;top:1065.8px" width="9" height="4" viewBox="0 0 9 4"><path d="M0.5 0.5 L4.5 3.5 L8.5 0.5" fill="none" stroke="#c8c8c8" stroke-width="1.1"/></svg><svg style="left:132px;top:1084px" width="8" height="8" viewBox="0 0 8 8"><path d="M0 0 V8 L8 4 Z" fill="#c8c8c8"/></svg><span class="t sf" style="left:152.5px;top:1081px;height:15px;line-height:15px;font-size:11px;color:#c0c0c0;letter-spacing:0.400px;word-spacing:2px;">变换 :  椭圆 1</span><svg style="left:92px;top:1104px" width="8" height="8" viewBox="0 0 8 8"><path d="M0 0 V8 L8 4 Z" fill="#c8c8c8"/></svg><span class="t sf" style="left:112.5px;top:1101px;height:15px;line-height:15px;font-size:11px;color:#c0c0c0;letter-spacing:0.400px;word-spacing:2px;">变换</span><span class="t sf" style="left:680px;top:1101.25px;height:14.5px;line-height:14.5px;font-size:10.5px;color:#2d8ceb;text-decoration:underline;font-weight:bold;">重置</span><div class="a" style="left:0px;top:1118px;width:1110px;height:19px;background:#474747;"></div><div class="a" style="left:3px;top:1119.5px;width:15px;height:14px;background:#1b1b1b;"></div><svg style="left:4.5px;top:1122px" width="12" height="9" viewBox="0 0 12 9"><path d="M0.300 4.500 C3 0 9 0 11.700 4.500 C9 9 3 9 0.300 4.500 Z" fill="#d8d8d8"/><circle cx="6" cy="4.300" r="2.400" fill="#1b1b1b"/><circle cx="5.200" cy="3.500" r="0.900" fill="#d8d8d8"/></svg><div class="a" style="left:34px;top:1120px;width:13px;height:14px;background:#3a3a3a;"></div><div class="a" style="left:49px;top:1120px;width:13px;height:14px;background:#3a3a3a;"></div><svg style="left:72px;top:1123.5px" width="8" height="8" viewBox="0 0 8 8"><path d="M0 0 H8 L4 8 Z" fill="#c8c8c8"/></svg><div class="a" style="left:85px;top:1120px;width:15px;height:15px;background:#6b7de8;"></div><span class="t sf" style="left:107px;top:1120px;height:16px;line-height:16px;font-size:12px;color:#d8d8d8;font-weight:bold;">2</span><svg style="left:138px;top:1121.5px" width="12" height="12" viewBox="0 0 12 12"><path d="M6 0.300 L7.500 4.300 L11.800 4.500 L8.400 7.200 L9.600 11.400 L6 9 L2.400 11.400 L3.600 7.200 L0.200 4.500 L4.500 4.300 Z" fill="#e0e0e0"/></svg><div class="a" style="left:154px;top:1118px;width:342px;height:19px;background:#474747;border:2px solid #c4c4c4;"></div><span class="t sf" style="left:157px;top:1121px;height:15px;line-height:15px;font-size:11px;color:#d8d8d8;font-weight:bold;letter-spacing:1.200px;word-spacing:2px;">形状图层 1</span><div class="a" style="left:679px;top:1120px;width:14px;height:14px;background:#3c3c3c;"></div><svg style="left:680px;top:1122px" width="13" height="10" viewBox="0 0 13 10"><path d="M2 5 A4.500 4.500 0 0 1 11 5 Z" fill="#c8c8c8"/><path d="M0 6.500 H13 M6.500 1 V9 M5 9 H8" stroke="#c8c8c8" stroke-width="1.100" fill="none"/><path d="M6.500 1 V5" stroke="#232323" stroke-width="1"/></svg><div class="a" style="left:695px;top:1120px;width:13px;height:14px;background:#3c3c3c;"></div><svg style="left:696px;top:1121.5px" width="11" height="11" viewBox="0 0 11 11"><circle cx="5.500" cy="5.500" r="2" fill="none" stroke="#767676" stroke-width="1.200"/><path d="M5.500 0 V2.200 M5.500 8.800 V11 M0 5.500 H2.200 M8.800 5.500 H11 M1.600 1.600 L3.200 3.200 M7.800 7.800 L9.400 9.400 M1.600 9.400 L3.200 7.800 M7.800 3.200 L9.400 1.600" stroke="#767676" stroke-width="1.100"/></svg><div class="a" style="left:709px;top:1120px;width:14px;height:14px;background:#3c3c3c;"></div><svg style="left:711px;top:1122px" width="11" height="11" viewBox="0 0 11 11"><path d="M0.500 10.500 L10.500 0.500" stroke="#d0d0d0" stroke-width="1.300"/></svg><div class="a" style="left:754px;top:1120px;width:13px;height:14px;background:#3a3a3a;"></div><div class="a" style="left:769px;top:1120px;width:13px;height:14px;background:#3a3a3a;"></div><div class="a" style="left:784px;top:1120px;width:13px;height:14px;background:#3a3a3a;"></div><div class="a" style="left:815px;top:1119px;width:69px;height:17px;background:#1c1c1c;border:1px solid #2c2c2c;"></div><span class="t " style="left:822px;top:1120px;height:16px;line-height:16px;font-size:12px;color:#d0d0d0;">正常</span><svg style="left:871px;top:1125.8px" width="9" height="4" viewBox="0 0 9 4"><path d="M0.5 0.5 L4.5 3.5 L8.5 0.5" fill="none" stroke="#c8c8c8" stroke-width="1.1"/></svg><div class="a" style="left:888px;top:1120px;width:14px;height:14px;background:#3a3a3a;"></div><div class="a" style="left:907px;top:1119px;width:66px;height:17px;background:#1c1c1c;border:1px solid #2c2c2c;"></div><span class="t " style="left:914px;top:1120px;height:16px;line-height:16px;font-size:12px;color:#d0d0d0;">无</span><svg style="left:960px;top:1125.8px" width="9" height="4" viewBox="0 0 9 4"><path d="M0.5 0.5 L4.5 3.5 L8.5 0.5" fill="none" stroke="#c8c8c8" stroke-width="1.1"/></svg><div class="a" style="left:974px;top:1118px;width:27px;height:19px;background:#555;"></div><svg style="left:982px;top:1121px" width="12" height="12" viewBox="0 0 12 12"><path d="M5.8 7.1 L6.0 7.0 L6.0 6.8 L6.1 6.6 L6.1 6.4 L6.0 6.2 L5.9 5.9 L5.8 5.7 L5.5 5.6 L5.3 5.5 L5.0 5.4 L4.6 5.4 L4.3 5.5 L4.0 5.7 L3.7 6.0 L3.5 6.3 L3.4 6.7 L3.3 7.1 L3.3 7.5 L3.5 7.9 L3.7 8.3 L4.1 8.7 L4.5 9.0 L4.9 9.1 L5.5 9.2 L6.0 9.2 L6.5 9.0 L7.0 8.7 L7.5 8.3 L7.8 7.8 L8.0 7.2 L8.1 6.6 L8.1 5.9 L7.9 5.3 L7.5 4.7 L7.0 4.2 L6.4 3.8 L5.8 3.5 L5.0 3.4 L4.3 3.4 L3.5 3.7 L2.8 4.0 L2.2 4.6 L1.8 5.2 L1.4 6.0 L1.3 6.9 L1.3 7.7 L1.5 8.6 L2.0 9.4 L2.6 10.1 L3.3 10.6 L4.2 11.0 L5.1 11.2 L6.1 11.2 L7.1 11.0 L8.0 10.5 L8.8 9.9 L9.4 9.0 L9.9 8.1 L10.1 7.0 L10.1 5.9 Q10.9 2.4 11.3 0.8" fill="none" stroke="#a8a8a8" stroke-width="1"/></svg><div class="a" style="left:1001px;top:1119px;width:89px;height:17px;background:#1c1c1c;border:1px solid #2c2c2c;"></div><span class="t " style="left:1008px;top:1120px;height:16px;line-height:16px;font-size:12px;color:#d0d0d0;">无</span><svg style="left:1077px;top:1125.8px" width="9" height="4" viewBox="0 0 9 4"><path d="M0.5 0.5 L4.5 3.5 L8.5 0.5" fill="none" stroke="#c8c8c8" stroke-width="1.1"/></svg><svg style="left:92px;top:1144px" width="8" height="8" viewBox="0 0 8 8"><path d="M0 0 H8 L4 8 Z" fill="#c8c8c8"/></svg><span class="t sf" style="left:112.5px;top:1141px;height:15px;line-height:15px;font-size:11px;color:#c0c0c0;letter-spacing:0.400px;word-spacing:2px;">内容</span><span class="t sf" style="left:765px;top:1138.5px;height:15px;line-height:15px;font-size:11px;color:#a8a8a8;letter-spacing:0.500px;">添加:</span><svg style="left:795px;top:1139.5px" width="12" height="12" viewBox="0 0 12 12"><circle cx="6" cy="6" r="5.600" fill="#d8d8d8"/><path d="M4.500 3 L9 6 L4.500 9 Z" fill="#232323"/></svg><div class="a" style="left:3px;top:1159.5px;width:15px;height:14px;background:#1b1b1b;"></div><svg style="left:4.5px;top:1162px" width="12" height="9" viewBox="0 0 12 9"><path d="M0.300 4.500 C3 0 9 0 11.700 4.500 C9 9 3 9 0.300 4.500 Z" fill="#d8d8d8"/><circle cx="6" cy="4.300" r="2.400" fill="#1b1b1b"/><circle cx="5.200" cy="3.500" r="0.900" fill="#d8d8d8"/></svg><svg style="left:112px;top:1164px" width="8" height="8" viewBox="0 0 8 8"><path d="M0 0 H8 L4 8 Z" fill="#c8c8c8"/></svg><span class="t sf" style="left:132.5px;top:1161px;height:15px;line-height:15px;font-size:11px;color:#c0c0c0;letter-spacing:0.400px;word-spacing:2px;">矩形 1</span><div class="a" style="left:680px;top:1159px;width:126px;height:17px;background:#1c1c1c;border:1px solid #2c2c2c;"></div><span class="t " style="left:687px;top:1160px;height:16px;line-height:16px;font-size:12px;color:#d0d0d0;">正常</span><svg style="left:793px;top:1165.8px" width="9" height="4" viewBox="0 0 9 4"><path d="M0.5 0.5 L4.5 3.5 L8.5 0.5" fill="none" stroke="#c8c8c8" stroke-width="1.1"/></svg><div class="a" style="left:149px;top:1178px;width:348px;height:19px;background:#474747;"></div><div class="a" style="left:3px;top:1179.5px;width:15px;height:14px;background:#1b1b1b;"></div><svg style="left:4.5px;top:1182px" width="12" height="9" viewBox="0 0 12 9"><path d="M0.300 4.500 C3 0 9 0 11.700 4.500 C9 9 3 9 0.300 4.500 Z" fill="#d8d8d8"/><circle cx="6" cy="4.300" r="2.400" fill="#1b1b1b"/><circle cx="5.200" cy="3.500" r="0.900" fill="#d8d8d8"/></svg><svg style="left:132px;top:1184px" width="8" height="8" viewBox="0 0 8 8"><path d="M0 0 H8 L4 8 Z" fill="#c8c8c8"/></svg><span class="t sf" style="left:152.5px;top:1181px;height:15px;line-height:15px;font-size:11px;color:#c0c0c0;letter-spacing:0.400px;word-spacing:2px;">路径 1</span><div class="a" style="left:680px;top:1179px;width:16px;height:15px;background:#16202c;"></div><svg style="left:681px;top:1181px" width="14" height="12" viewBox="0 0 14 12"><path d="M2.500 2 H11.500 M13 9 H2 M1.500 9 L4 7 M1.500 9 L4 11" stroke="#3a8ae0" stroke-width="1.100" fill="none"/><rect x="0.500" y="0.500" width="3" height="3" fill="#16202c" stroke="#3a8ae0" stroke-width="0.900"/><rect x="10.500" y="0.500" width="3" height="3" fill="#16202c" stroke="#3a8ae0" stroke-width="0.900"/></svg><div class="a" style="left:698px;top:1179px;width:16px;height:15px;background:#1c1c1c;"></div><svg style="left:699px;top:1181px" width="14" height="12" viewBox="0 0 14 12"><path d="M2.500 2 H11.500 M1 9 H12 M12.500 9 L10 7 M12.500 9 L10 11" stroke="#d0d0d0" stroke-width="1.100" fill="none"/><circle cx="2" cy="2" r="1.500" fill="#1c1c1c" stroke="#d0d0d0" stroke-width="0.900"/><circle cx="12" cy="2" r="1.500" fill="#1c1c1c" stroke="#d0d0d0" stroke-width="0.900"/></svg><div class="a" style="left:204px;top:1198px;width:293px;height:19px;background:#474747;"></div><svg style="left:169px;top:1200px" width="12" height="14" viewBox="0 0 12 14"><circle cx="6" cy="8" r="4.800" fill="none" stroke="#2d8ceb" stroke-width="1.300"/><path d="M4 1 H8 M6 1 V3 M6 8 L8.500 5" stroke="#2d8ceb" stroke-width="1.200" fill="none"/></svg><svg style="left:187px;top:1201px" width="12" height="12" viewBox="0 0 12 12"><path d="M1 0.500 V11 H11.500" stroke="#c0c0c0" stroke-width="1.100" fill="none"/><path d="M2.500 8.500 L5 4.500 L7.500 8 L10.500 4" stroke="#c0c0c0" stroke-width="1" fill="none"/></svg><span class="t sf" style="left:208px;top:1201px;height:15px;line-height:15px;font-size:11px;color:#d0d0d0;letter-spacing:0.400px;">路径</span><svg style="left:6px;top:1203px" width="6" height="9" viewBox="0 0 6 9"><path d="M6 0 V9 L0 4.500 Z" fill="#3c3c3c"/></svg><div class="a" style="left:19px;top:1200px;width:14px;height:15px;background:#1b1b1b;"></div><svg style="left:21px;top:1203px" width="10" height="10" viewBox="0 0 10 10"><path d="M5 0 L10 5 L5 10 L0 5 Z" fill="#2d8ceb"/></svg><svg style="left:38px;top:1203px" width="6" height="9" viewBox="0 0 6 9"><path d="M0 0 V9 L6 4.500 Z" fill="#3c3c3c"/></svg><div class="a" style="left:3px;top:1219.5px;width:15px;height:14px;background:#1b1b1b;"></div><svg style="left:132px;top:1224px" width="8" height="8" viewBox="0 0 8 8"><path d="M0 0 V8 L8 4 Z" fill="#c8c8c8"/></svg><span class="t sf" style="left:152.5px;top:1221px;height:15px;line-height:15px;font-size:11px;color:#c0c0c0;letter-spacing:0.400px;word-spacing:2px;">描边 1</span><div class="a" style="left:680px;top:1219px;width:126px;height:17px;background:#1c1c1c;border:1px solid #2c2c2c;"></div><span class="t " style="left:687px;top:1220px;height:16px;line-height:16px;font-size:12px;color:#d0d0d0;">正常</span><svg style="left:793px;top:1225.8px" width="9" height="4" viewBox="0 0 9 4"><path d="M0.5 0.5 L4.5 3.5 L8.5 0.5" fill="none" stroke="#c8c8c8" stroke-width="1.1"/></svg><div class="a" style="left:3px;top:1239.5px;width:15px;height:14px;background:#1b1b1b;"></div><svg style="left:4.5px;top:1242px" width="12" height="9" viewBox="0 0 12 9"><path d="M0.300 4.500 C3 0 9 0 11.700 4.500 C9 9 3 9 0.300 4.500 Z" fill="#d8d8d8"/><circle cx="6" cy="4.300" r="2.400" fill="#1b1b1b"/><circle cx="5.200" cy="3.500" r="0.900" fill="#d8d8d8"/></svg><svg style="left:132px;top:1244px" width="8" height="8" viewBox="0 0 8 8"><path d="M0 0 V8 L8 4 Z" fill="#c8c8c8"/></svg><span class="t sf" style="left:152.5px;top:1241px;height:15px;line-height:15px;font-size:11px;color:#c0c0c0;letter-spacing:0.400px;word-spacing:2px;">填充 1</span><div class="a" style="left:680px;top:1239px;width:126px;height:17px;background:#1c1c1c;border:1px solid #2c2c2c;"></div><span class="t " style="left:687px;top:1240px;height:16px;line-height:16px;font-size:12px;color:#d0d0d0;">正常</span><svg style="left:793px;top:1245.8px" width="9" height="4" viewBox="0 0 9 4"><path d="M0.5 0.5 L4.5 3.5 L8.5 0.5" fill="none" stroke="#c8c8c8" stroke-width="1.1"/></svg><svg style="left:132px;top:1264px" width="8" height="8" viewBox="0 0 8 8"><path d="M0 0 V8 L8 4 Z" fill="#c8c8c8"/></svg><span class="t sf" style="left:152.5px;top:1261px;height:15px;line-height:15px;font-size:11px;color:#c0c0c0;letter-spacing:0.400px;word-spacing:2px;">变换 :  矩形 1</span><svg style="left:92px;top:1284px" width="8" height="8" viewBox="0 0 8 8"><path d="M0 0 V8 L8 4 Z" fill="#c8c8c8"/></svg><span class="t sf" style="left:112.5px;top:1281px;height:15px;line-height:15px;font-size:11px;color:#c0c0c0;letter-spacing:0.400px;word-spacing:2px;">变换</span><span class="t sf" style="left:680px;top:1281.25px;height:14.5px;line-height:14.5px;font-size:10.5px;color:#2d8ceb;text-decoration:underline;font-weight:bold;">重置</span><div class="a" style="left:1110px;top:888px;width:1px;height:493px;background:#121212;"></div><div class="a" style="left:1111px;top:888px;width:1430px;height:1px;background:#0c0c0c;"></div><div class="a" style="left:1119px;top:889px;width:1414px;height:8px;background:#6e6e6e;"></div><div class="a" style="left:1111px;top:889px;width:8px;height:8px;background:#3399ff;border-radius:5px 0 0 5px;"></div><div class="a" style="left:2533px;top:889px;width:7px;height:8px;background:#3399ff;border-radius:0 5px 5px 0;"></div><div class="a" style="left:1111px;top:897px;width:1430px;height:1px;background:#0c0c0c;"></div><span class="t " style="left:1112px;top:897.5px;height:14px;line-height:14px;font-size:10px;color:#c0c0c0;letter-spacing:-0.300px;">0000</span><span class="t" style="left:1153.66px;top:898px;height:13px;line-height:13px;font-size:10px;color:#c0c0c0;width:40px;text-align:center;letter-spacing:-0.300px;">00010</span><div class="a" style="left:1175px;top:912px;width:1px;height:5px;background:#b0b0b0;"></div><span class="t" style="left:1210.22px;top:898px;height:13px;line-height:13px;font-size:10px;color:#c0c0c0;width:40px;text-align:center;letter-spacing:-0.300px;">00020</span><div class="a" style="left:1232px;top:912px;width:1px;height:5px;background:#b0b0b0;"></div><span class="t" style="left:1266.78px;top:898px;height:13px;line-height:13px;font-size:10px;color:#c0c0c0;width:40px;text-align:center;letter-spacing:-0.300px;">00030</span><div class="a" style="left:1288px;top:912px;width:1px;height:5px;background:#b0b0b0;"></div><span class="t" style="left:1323.34px;top:898px;height:13px;line-height:13px;font-size:10px;color:#c0c0c0;width:40px;text-align:center;letter-spacing:-0.300px;">00040</span><div class="a" style="left:1345px;top:912px;width:1px;height:5px;background:#b0b0b0;"></div><span class="t" style="left:1379.9px;top:898px;height:13px;line-height:13px;font-size:10px;color:#c0c0c0;width:40px;text-align:center;letter-spacing:-0.300px;">00050</span><div class="a" style="left:1401px;top:912px;width:1px;height:5px;background:#b0b0b0;"></div><span class="t" style="left:1436.46px;top:898px;height:13px;line-height:13px;font-size:10px;color:#c0c0c0;width:40px;text-align:center;letter-spacing:-0.300px;">00060</span><div class="a" style="left:1458px;top:912px;width:1px;height:5px;background:#b0b0b0;"></div><span class="t" style="left:1493.02px;top:898px;height:13px;line-height:13px;font-size:10px;color:#c0c0c0;width:40px;text-align:center;letter-spacing:-0.300px;">00070</span><div class="a" style="left:1515px;top:912px;width:1px;height:5px;background:#b0b0b0;"></div><span class="t" style="left:1549.58px;top:898px;height:13px;line-height:13px;font-size:10px;color:#c0c0c0;width:40px;text-align:center;letter-spacing:-0.300px;">00080</span><div class="a" style="left:1571px;top:912px;width:1px;height:5px;background:#b0b0b0;"></div><span class="t" style="left:1606.14px;top:898px;height:13px;line-height:13px;font-size:10px;color:#c0c0c0;width:40px;text-align:center;letter-spacing:-0.300px;">00090</span><div class="a" style="left:1628px;top:912px;width:1px;height:5px;background:#b0b0b0;"></div><span class="t" style="left:1662.7px;top:898px;height:13px;line-height:13px;font-size:10px;color:#c0c0c0;width:40px;text-align:center;letter-spacing:-0.300px;">00100</span><div class="a" style="left:1684px;top:912px;width:1px;height:5px;background:#b0b0b0;"></div><span class="t" style="left:1719.26px;top:898px;height:13px;line-height:13px;font-size:10px;color:#c0c0c0;width:40px;text-align:center;letter-spacing:-0.300px;">00110</span><div class="a" style="left:1741px;top:912px;width:1px;height:5px;background:#b0b0b0;"></div><span class="t" style="left:1775.82px;top:898px;height:13px;line-height:13px;font-size:10px;color:#c0c0c0;width:40px;text-align:center;letter-spacing:-0.300px;">00120</span><div class="a" style="left:1797px;top:912px;width:1px;height:5px;background:#b0b0b0;"></div><span class="t" style="left:1832.38px;top:898px;height:13px;line-height:13px;font-size:10px;color:#c0c0c0;width:40px;text-align:center;letter-spacing:-0.300px;">00130</span><div class="a" style="left:1854px;top:912px;width:1px;height:5px;background:#b0b0b0;"></div><span class="t" style="left:1888.94px;top:898px;height:13px;line-height:13px;font-size:10px;color:#c0c0c0;width:40px;text-align:center;letter-spacing:-0.300px;">00140</span><div class="a" style="left:1910px;top:912px;width:1px;height:5px;background:#b0b0b0;"></div><span class="t" style="left:1945.5px;top:898px;height:13px;line-height:13px;font-size:10px;color:#c0c0c0;width:40px;text-align:center;letter-spacing:-0.300px;">00150</span><div class="a" style="left:1967px;top:912px;width:1px;height:5px;background:#b0b0b0;"></div><span class="t" style="left:2002.06px;top:898px;height:13px;line-height:13px;font-size:10px;color:#c0c0c0;width:40px;text-align:center;letter-spacing:-0.300px;">00160</span><div class="a" style="left:2024px;top:912px;width:1px;height:5px;background:#b0b0b0;"></div><span class="t" style="left:2058.62px;top:898px;height:13px;line-height:13px;font-size:10px;color:#c0c0c0;width:40px;text-align:center;letter-spacing:-0.300px;">00170</span><div class="a" style="left:2080px;top:912px;width:1px;height:5px;background:#b0b0b0;"></div><span class="t" style="left:2115.18px;top:898px;height:13px;line-height:13px;font-size:10px;color:#c0c0c0;width:40px;text-align:center;letter-spacing:-0.300px;">00180</span><div class="a" style="left:2137px;top:912px;width:1px;height:5px;background:#b0b0b0;"></div><span class="t" style="left:2171.74px;top:898px;height:13px;line-height:13px;font-size:10px;color:#c0c0c0;width:40px;text-align:center;letter-spacing:-0.300px;">00190</span><div class="a" style="left:2193px;top:912px;width:1px;height:5px;background:#b0b0b0;"></div><span class="t" style="left:2228.3px;top:898px;height:13px;line-height:13px;font-size:10px;color:#c0c0c0;width:40px;text-align:center;letter-spacing:-0.300px;">00200</span><div class="a" style="left:2250px;top:912px;width:1px;height:5px;background:#b0b0b0;"></div><span class="t" style="left:2284.86px;top:898px;height:13px;line-height:13px;font-size:10px;color:#c0c0c0;width:40px;text-align:center;letter-spacing:-0.300px;">00210</span><div class="a" style="left:2306px;top:912px;width:1px;height:5px;background:#b0b0b0;"></div><span class="t" style="left:2341.42px;top:898px;height:13px;line-height:13px;font-size:10px;color:#c0c0c0;width:40px;text-align:center;letter-spacing:-0.300px;">00220</span><div class="a" style="left:2363px;top:912px;width:1px;height:5px;background:#b0b0b0;"></div><span class="t" style="left:2397.98px;top:898px;height:13px;line-height:13px;font-size:10px;color:#c0c0c0;width:40px;text-align:center;letter-spacing:-0.300px;">00230</span><div class="a" style="left:2419px;top:912px;width:1px;height:5px;background:#b0b0b0;"></div><span class="t" style="left:2454.54px;top:898px;height:13px;line-height:13px;font-size:10px;color:#c0c0c0;width:40px;text-align:center;letter-spacing:-0.300px;">00240</span><div class="a" style="left:2476px;top:912px;width:1px;height:5px;background:#b0b0b0;"></div><span class="t" style="left:2518px;top:898px;height:13px;line-height:13px;font-size:10px;color:#c0c0c0;width:22px;overflow:hidden;letter-spacing:-0.300px;">00250</span><div class="a" style="left:2533px;top:912px;width:1px;height:5px;background:#b0b0b0;"></div><div class="a" style="left:1111px;top:917px;width:1445px;height:1px;background:#0c0c0c;"></div><div class="a" style="left:1119px;top:918px;width:1414px;height:16px;background:#666666;"></div><div class="a" style="left:1112px;top:919px;width:7px;height:14px;background:#3399ff;border-radius:4px 0 0 4px;"></div><div class="a" style="left:2533px;top:919px;width:6px;height:14px;background:#3399ff;border-radius:0 4px 4px 0;"></div><div class="a" style="left:1119px;top:934px;width:1414px;height:3px;background:#25c03c;"></div><div class="a" style="left:1111px;top:937px;width:1445px;height:1px;background:#0c0c0c;"></div><div class="a" style="left:1111px;top:938px;width:1422px;height:443px;background:#323232;"></div><div class="a" style="left:2533px;top:938px;width:7px;height:443px;background:#2b2b2b;"></div><div class="a" style="left:2540px;top:937px;width:1px;height:444px;background:#121212;"></div><div class="a" style="left:1111px;top:957px;width:1422px;height:1px;background:#292929;"></div><div class="a" style="left:1111px;top:977px;width:1422px;height:1px;background:#292929;"></div><div class="a" style="left:1111px;top:997px;width:1422px;height:1px;background:#292929;"></div><div class="a" style="left:1111px;top:1017px;width:1422px;height:1px;background:#292929;"></div><div class="a" style="left:1111px;top:1037px;width:1422px;height:1px;background:#292929;"></div><div class="a" style="left:1111px;top:1057px;width:1422px;height:1px;background:#292929;"></div><div class="a" style="left:1111px;top:1077px;width:1422px;height:1px;background:#292929;"></div><div class="a" style="left:1111px;top:1097px;width:1422px;height:1px;background:#292929;"></div><div class="a" style="left:1111px;top:1117px;width:1422px;height:1px;background:#292929;"></div><div class="a" style="left:1111px;top:1137px;width:1422px;height:1px;background:#292929;"></div><div class="a" style="left:1111px;top:1157px;width:1422px;height:1px;background:#292929;"></div><div class="a" style="left:1111px;top:1177px;width:1422px;height:1px;background:#292929;"></div><div class="a" style="left:1111px;top:1197px;width:1422px;height:1px;background:#292929;"></div><div class="a" style="left:1111px;top:1217px;width:1422px;height:1px;background:#292929;"></div><div class="a" style="left:1111px;top:1237px;width:1422px;height:1px;background:#292929;"></div><div class="a" style="left:1111px;top:1257px;width:1422px;height:1px;background:#292929;"></div><div class="a" style="left:1111px;top:1277px;width:1422px;height:1px;background:#292929;"></div><div class="a" style="left:1111px;top:1297px;width:1422px;height:1px;background:#292929;"></div><div class="a" style="left:1119px;top:940px;width:1414px;height:17px;background:#545e8e;"></div><div class="a" style="left:1119px;top:1120px;width:1414px;height:17px;background:#5568d0;background:linear-gradient(#8494ea 0,#5f72dc 2px,#586ad4 13px,#4c5cc0 17px);"></div><svg style="left:1114.5px;top:1203.5px" width="8" height="8" viewBox="0 0 8 8"><path d="M4 0 L8 4 L4 8 L0 4 Z" fill="#1f6fd0"/></svg><div class="a" style="left:1118px;top:915px;width:1px;height:466px;background:#4382d8;"></div><svg style="left:1112px;top:902px" width="14" height="14" viewBox="0 0 14 14"><path d="M0.500 2 Q0.500 0.500 2 0.500 H12 Q13.500 0.500 13.500 2 V6 L7 13.500 L0.500 6 Z" fill="#3399ff"/><path d="M5 5 H9 L7 8 Z" fill="#1a3a6a"/></svg><svg style="left:1115px;top:961px" width="7" height="11" viewBox="0 0 7 11"><path d="M0.500 0.500 H6.500 M0.500 10.500 H6.500 M3.500 0.500 V10.500" stroke="#d0d0d0" stroke-width="1.100" fill="none"/></svg><svg style="left:1115px;top:981px" width="7" height="11" viewBox="0 0 7 11"><path d="M0.500 0.500 H6.500 M0.500 10.500 H6.500 M3.500 0.500 V10.500" stroke="#d0d0d0" stroke-width="1.100" fill="none"/></svg><svg style="left:1115px;top:1001px" width="7" height="11" viewBox="0 0 7 11"><path d="M0.500 0.500 H6.500 M0.500 10.500 H6.500 M3.500 0.500 V10.500" stroke="#d0d0d0" stroke-width="1.100" fill="none"/></svg><svg style="left:1115px;top:1021px" width="7" height="11" viewBox="0 0 7 11"><path d="M0.500 0.500 H6.500 M0.500 10.500 H6.500 M3.500 0.500 V10.500" stroke="#d0d0d0" stroke-width="1.100" fill="none"/></svg><svg style="left:1115px;top:1041px" width="7" height="11" viewBox="0 0 7 11"><path d="M0.500 0.500 H6.500 M0.500 10.500 H6.500 M3.500 0.500 V10.500" stroke="#d0d0d0" stroke-width="1.100" fill="none"/></svg><svg style="left:1115px;top:1061px" width="7" height="11" viewBox="0 0 7 11"><path d="M0.500 0.500 H6.500 M0.500 10.500 H6.500 M3.500 0.500 V10.500" stroke="#d0d0d0" stroke-width="1.100" fill="none"/></svg><svg style="left:1115px;top:1081px" width="7" height="11" viewBox="0 0 7 11"><path d="M0.500 0.500 H6.500 M0.500 10.500 H6.500 M3.500 0.500 V10.500" stroke="#d0d0d0" stroke-width="1.100" fill="none"/></svg><svg style="left:1115px;top:1101px" width="7" height="11" viewBox="0 0 7 11"><path d="M0.500 0.500 H6.500 M0.500 10.500 H6.500 M3.500 0.500 V10.500" stroke="#d0d0d0" stroke-width="1.100" fill="none"/></svg><svg style="left:1115px;top:1141px" width="7" height="11" viewBox="0 0 7 11"><path d="M0.500 0.500 H6.500 M0.500 10.500 H6.500 M3.500 0.500 V10.500" stroke="#d0d0d0" stroke-width="1.100" fill="none"/></svg><svg style="left:1115px;top:1161px" width="7" height="11" viewBox="0 0 7 11"><path d="M0.500 0.500 H6.500 M0.500 10.500 H6.500 M3.500 0.500 V10.500" stroke="#d0d0d0" stroke-width="1.100" fill="none"/></svg><svg style="left:1115px;top:1181px" width="7" height="11" viewBox="0 0 7 11"><path d="M0.500 0.500 H6.500 M0.500 10.500 H6.500 M3.500 0.500 V10.500" stroke="#d0d0d0" stroke-width="1.100" fill="none"/></svg><svg style="left:1115px;top:1221px" width="7" height="11" viewBox="0 0 7 11"><path d="M0.500 0.500 H6.500 M0.500 10.500 H6.500 M3.500 0.500 V10.500" stroke="#d0d0d0" stroke-width="1.100" fill="none"/></svg><svg style="left:1115px;top:1241px" width="7" height="11" viewBox="0 0 7 11"><path d="M0.500 0.500 H6.500 M0.500 10.500 H6.500 M3.500 0.500 V10.500" stroke="#d0d0d0" stroke-width="1.100" fill="none"/></svg><svg style="left:1115px;top:1261px" width="7" height="11" viewBox="0 0 7 11"><path d="M0.500 0.500 H6.500 M0.500 10.500 H6.500 M3.500 0.500 V10.500" stroke="#d0d0d0" stroke-width="1.100" fill="none"/></svg><svg style="left:1115px;top:1281px" width="7" height="11" viewBox="0 0 7 11"><path d="M0.500 0.500 H6.500 M0.500 10.500 H6.500 M3.500 0.500 V10.500" stroke="#d0d0d0" stroke-width="1.100" fill="none"/></svg><svg style="left:2543.5px;top:920.3px" width="11" height="14" viewBox="0 0 11 14"><path d="M0.500 0.500 H10.500 V8 L5.500 13.500 L0.500 8 Z" fill="#c0c0c0"/></svg><svg style="left:2542px;top:941px" width="14" height="13" viewBox="0 0 14 13"><path d="M5 4 H13 V10 H5 L0.500 7 Z" fill="#c0c0c0"/><path d="M0.500 7 L6.500 1" stroke="#c0c0c0" stroke-width="1"/><circle cx="6.500" cy="9" r="2" fill="#232323" stroke="#c0c0c0" stroke-width="1"/></svg><div class="a" style="left:0px;top:1381px;width:2556px;height:1px;background:#1e1e1e;"></div><div class="a" style="left:0px;top:1381px;width:1216px;height:1px;background:#080808;"></div><div class="a" style="left:0px;top:1382px;width:2556px;height:16px;background:#232323;"></div><svg style="left:5px;top:1384px" width="12" height="12" viewBox="0 0 12 12"><rect x="0.500" y="0.500" width="7.500" height="7.500" fill="none" stroke="#2d8ceb" stroke-width="1.100"/><rect x="3.500" y="3.500" width="8" height="8" fill="#232323" stroke="#2d8ceb" stroke-width="1.100"/><rect x="6" y="6" width="3" height="3" fill="#2d8ceb"/></svg><div class="a" style="left:21px;top:1382px;width:17px;height:16px;background:#1a2028;"></div><svg style="left:24px;top:1384px" width="12" height="12" viewBox="0 0 12 12"><circle cx="4.500" cy="4.500" r="4" fill="none" stroke="#2d8ceb" stroke-width="1.100"/><rect x="4.500" y="4.500" width="7" height="7" fill="none" stroke="#2d8ceb" stroke-width="1.100"/></svg><svg style="left:42px;top:1384px" width="10" height="12" viewBox="0 0 10 12"><path d="M3 0.500 C1 0.500 2.500 5.500 0.500 6 C2.500 6.500 1 11.500 3 11.500 M7 0.500 C9 0.500 7.500 5.500 9.500 6 C7.500 6.500 9 11.500 7 11.500" stroke="#c0c0c0" stroke-width="1.300" fill="none"/><rect x="3.500" y="2" width="3" height="8" fill="#8c8c8c"/></svg><svg style="left:1116px;top:1386px" width="10" height="5" viewBox="0 0 10 5"><path d="M0 5 L4 0.500 L6 2.500 L7.500 1.500 L10 5 Z" fill="#c0c0c0"/></svg><svg style="left:1136px;top:1385px" width="10" height="10" viewBox="0 0 10 10"><circle cx="5" cy="5" r="3.900" fill="#232323" stroke="#b0b0b0" stroke-width="2"/></svg><div class="a" style="left:1147px;top:1388.5px;width:38px;height:1.5px;background:#454545;"></div><svg style="left:1196px;top:1384px" width="18" height="8" viewBox="0 0 18 8"><path d="M0 8 L7 0.500 L10 4 L12.500 1.500 L18 8 Z" fill="#c0c0c0"/></svg><svg style="left:0px;top:0px" width="2556" height="1398" viewBox="0 0 2556 1398"><g fill="#f01828" stroke="none"><path d="M375.2 1108.4 L289.8 1154.5 L288.9 1150.2 L276.6 1164.5 L295.8 1163.1 L294.3 1160 L377.2 1112 A2.050 2.050 0 0 0 375.200 1108.400 Z"/><path d="M1302.5 1253.1 L1168.2 1221.4 L1171 1216.1 L1152.3 1220 L1166.8 1231.3 L1167.5 1227 L1301.5 1257.3 A2.150 2.150 0 0 0 1302.500 1253.100 Z"/></g></svg><div class="a" style="left:2046px;top:1125.5px;width:61px;height:28px;background:#ffffff;border-radius:14px;border:1.500px solid #2f6fd6;border-right-color:#ffffff;border-top-color:#4a86e0;"></div><span class="t " style="left:2082.5px;top:1132px;height:17px;line-height:17px;font-size:13px;color:#2d78e0;font-weight:bold;">英</span><div class="a" style="left:2026.5px;top:1103px;width:49px;height:49px;background:#ffffff;border-radius:50%;border:2.500px solid #2f74dc;"></div><div class="a" style="left:2029.5px;top:1106px;width:43px;height:43px;background:#ffffff;border-radius:50%;border:1.500px solid #111;"></div><svg style="left:2037px;top:1113px" width="28" height="23" viewBox="0 0 28 23"><path d="M14 22 C10.500 22 9.500 17 10.500 12.500 C12 11.500 16 11.500 17.500 12.500 C18.500 17 17.500 22 14 22 Z" fill="#000"/><path d="M11.500 12.800 C9 10.500 6.500 8 4.800 2.500 M7 8.200 L2.800 7.600 M8.700 10 L9 4.200 M16.500 12.800 C19 10.500 21.500 8 23.200 2.500 M21 8.200 L25.200 7.600 M19.300 10 L19 4.200" stroke="#000" stroke-width="1.300" fill="none" stroke-linecap="round"/></svg><span class="t sf" style="left:2041.5px;top:1135.5px;height:10px;line-height:10px;font-size:6px;color:#111;font-weight:bold;letter-spacing:0.400px;font-style:italic;">行鹿者</span></body></html>
